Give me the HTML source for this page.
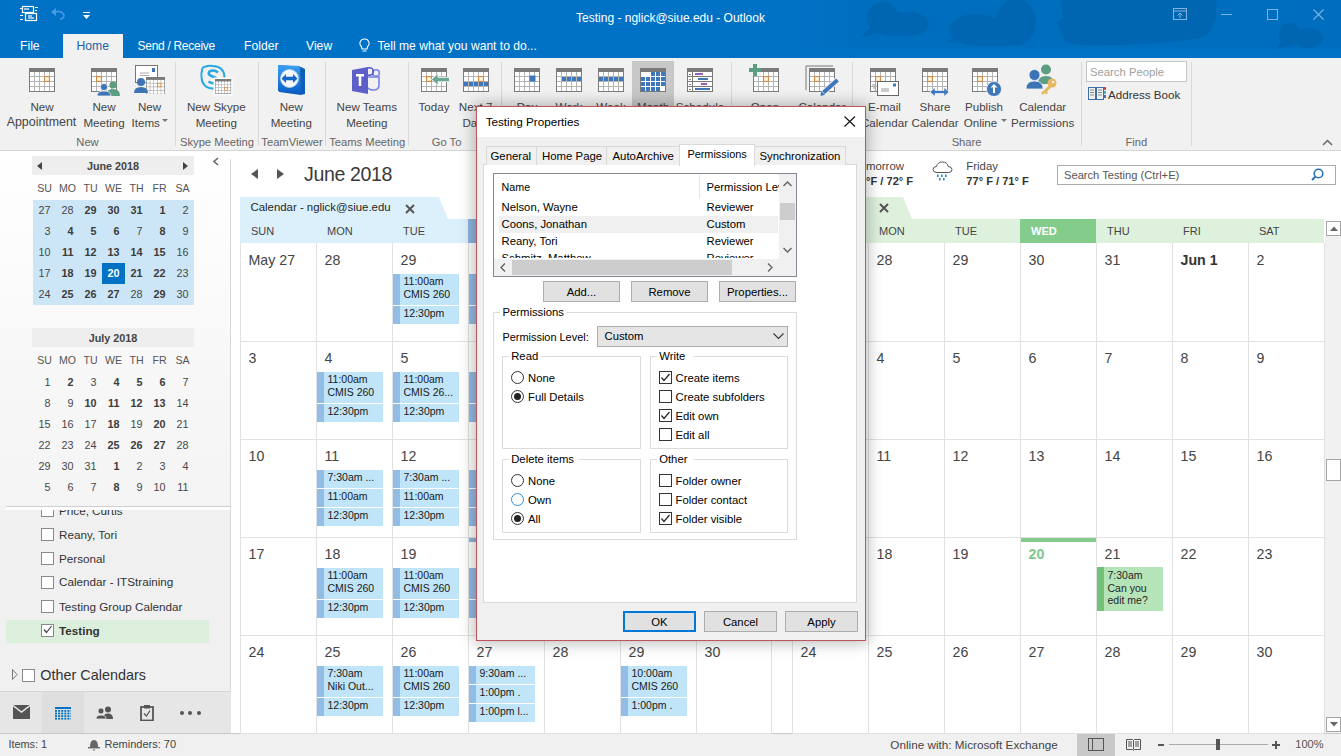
<!DOCTYPE html>
<html><head><meta charset="utf-8"><style>
*{margin:0;padding:0;box-sizing:border-box}
html,body{width:1341px;height:756px;overflow:hidden;background:#fff;font-family:"Liberation Sans",sans-serif}
.t{position:absolute;white-space:nowrap}
.b{position:absolute}
</style></head><body>

<div class="b" style="left:0px;top:0px;width:1341px;height:58px;background:#0072c6"></div>
<svg class="b" style="left:780px;top:0px;" width="561" height="49" viewBox="0 0 561 49"><defs><linearGradient id="tbg" x1="0" x2="1" y1="0" y2="0"><stop offset="0" stop-color="#000" stop-opacity="0"/><stop offset="0.15" stop-color="#000" stop-opacity="0.035"/><stop offset="1" stop-color="#000" stop-opacity="0.04"/></linearGradient></defs>
<rect x="0" y="0" width="561" height="49" fill="url(#tbg)"/>
<g fill="#0066b2">
<circle cx="103" cy="18" r="16"/><ellipse cx="130" cy="24" rx="19" ry="11.5"/><rect x="100" y="12" width="40" height="23.5" rx="6"/>
<path d="M90 28 L81 37 L100 33Z"/>
<ellipse cx="236" cy="22" rx="20" ry="24"/><ellipse cx="196" cy="30" rx="27" ry="16"/><rect x="185" y="20" width="50" height="26" rx="10"/>
<path d="M178 36 L166 41 L190 44Z"/>
<path d="M280 -2 L436 -2 Q440 30 420 38 Q360 47 300 45 Q282 44 282 34 L277 23 L283 18Z"/>
<circle cx="510" cy="34" r="11"/><ellipse cx="528" cy="38" rx="15" ry="10"/><path d="M502 40 L496 49 L515 45Z"/>
</g></svg>
<svg class="b" style="left:20px;top:5px;" width="19" height="18" viewBox="0 0 19 18"><g fill="none" stroke="#fff" stroke-width="1.2">
<rect x="2.5" y="1.5" width="11" height="6"/><rect x="5.5" y="8.5" width="11" height="7"/>
<line x1="4" y1="4" x2="9" y2="4"/><line x1="8" y1="11" x2="12" y2="11"/><line x1="8" y1="13" x2="14" y2="13"/>
</g><g fill="#fff"><rect x="0" y="3" width="2" height="1"/><rect x="0" y="10" width="3" height="1"/><rect x="0" y="14" width="3" height="1"/><rect x="15" y="2" width="3" height="1"/><rect x="15" y="5" width="2" height="1"/></g></svg>
<svg class="b" style="left:50px;top:7px;" width="16" height="13" viewBox="0 0 16 13"><path d="M4 5 Q12 3 14 8 Q14 12 10 12" fill="none" stroke="#4a9be0" stroke-width="1.5"/><path d="M1 5 L6 1 L6 9 Z" fill="#4a9be0"/></svg>
<svg class="b" style="left:83px;top:12px;" width="7" height="8" viewBox="0 0 7 8"><rect x="0" y="0" width="7" height="1" fill="#fff"/><path d="M0 3 L7 3 L3.5 7Z" fill="#fff"/></svg>
<div class="t" style="left:470.5px;width:400px;text-align:center;top:11.64px;font-size:12px;line-height:12px;color:#ffffff;font-weight:normal;">Testing - nglick@siue.edu - Outlook</div>
<svg class="b" style="left:1173px;top:8px;" width="14" height="12" viewBox="0 0 14 12"><g fill="none" stroke="#80b3e2" stroke-width="1"><rect x="0.5" y="0.5" width="13" height="11"/><line x1="0.5" y1="3" x2="13.5" y2="3"/><path d="M7 10 L7 5 M4.5 7.5 L7 5 L9.5 7.5"/></g></svg>
<div class="b" style="left:1221px;top:14px;width:11px;height:1px;background:#80b3e2"></div>
<div class="b" style="left:1267px;top:9px;width:11px;height:11px;border:1px solid #80b3e2"></div>
<svg class="b" style="left:1313px;top:9px;" width="11" height="11" viewBox="0 0 11 11"><path d="M0.5 0.5 L10.5 10.5 M10.5 0.5 L0.5 10.5" stroke="#80b3e2" stroke-width="1.1"/></svg>
<div class="b" style="left:63px;top:34px;width:60px;height:24px;background:#f1f1f1"></div>
<div class="t" style="left:20px;top:39.97px;font-size:12.2px;line-height:12.2px;color:#ffffff;font-weight:normal;">File</div>
<div class="t" style="left:76.5px;top:39.97px;font-size:12.2px;line-height:12.2px;color:#1e5fa8;font-weight:normal;">Home</div>
<div class="t" style="left:137.5px;top:40.14px;font-size:12px;line-height:12px;color:#ffffff;font-weight:normal;letter-spacing:-0.25px;word-spacing:-0.2px">Send / Receive</div>
<div class="t" style="left:244px;top:39.97px;font-size:12.2px;line-height:12.2px;color:#ffffff;font-weight:normal;">Folder</div>
<div class="t" style="left:306px;top:39.97px;font-size:12.2px;line-height:12.2px;color:#ffffff;font-weight:normal;">View</div>
<svg class="b" style="left:359px;top:38px;" width="11" height="15" viewBox="0 0 11 15"><path d="M5.5 1 A4.3 4.3 0 0 1 8.6 8.5 L8 11 L3 11 L2.4 8.5 A4.3 4.3 0 0 1 5.5 1Z" fill="none" stroke="#fff" stroke-width="1.1"/><line x1="3.5" y1="13" x2="7.5" y2="13" stroke="#fff"/></svg>
<div class="t" style="left:377.5px;top:40.06px;font-size:12.1px;line-height:12.1px;color:#ffffff;font-weight:normal;">Tell me what you want to do...</div>
<div class="b" style="left:0px;top:58px;width:1341px;height:93px;background:#f1f1f1;border-bottom:1px solid #d5d5d5"></div>
<div class="b" style="left:175px;top:62px;width:1px;height:84px;background:#d8d8d8"></div>
<div class="b" style="left:258px;top:62px;width:1px;height:84px;background:#d8d8d8"></div>
<div class="b" style="left:325px;top:62px;width:1px;height:84px;background:#d8d8d8"></div>
<div class="b" style="left:408px;top:62px;width:1px;height:84px;background:#d8d8d8"></div>
<div class="b" style="left:501px;top:62px;width:1px;height:84px;background:#d8d8d8"></div>
<div class="b" style="left:731px;top:62px;width:1px;height:84px;background:#d8d8d8"></div>
<div class="b" style="left:852px;top:62px;width:1px;height:84px;background:#d8d8d8"></div>
<div class="b" style="left:1081px;top:62px;width:1px;height:84px;background:#d8d8d8"></div>
<div class="b" style="left:1191px;top:62px;width:1px;height:84px;background:#d8d8d8"></div>
<svg class="b" style="left:29px;top:68px;" width="26" height="24" viewBox="0 0 26 24"><rect x="0" y="0" width="26" height="24" fill="#7c7c7c"/><rect x="1" y="4" width="24" height="19" fill="#b4b4b4"/><rect x="0" y="0" width="26" height="4" fill="#7a7a7a"/><rect x="1" y="4" width="4" height="4" fill="#ffffff"/><rect x="6" y="4" width="4" height="4" fill="#ffffff"/><rect x="11" y="4" width="4" height="4" fill="#ffffff"/><rect x="16" y="4" width="4" height="4" fill="#ffffff"/><rect x="21" y="4" width="4" height="4" fill="#ffffff"/><rect x="1" y="9" width="4" height="4" fill="#ffffff"/><rect x="6" y="9" width="4" height="4" fill="#ffffff"/><rect x="11" y="9" width="4" height="4" fill="#ffffff"/><rect x="16" y="9" width="4" height="4" fill="#ffffff"/><rect x="21" y="9" width="4" height="4" fill="#ffffff"/><rect x="1" y="14" width="4" height="4" fill="#ffffff"/><rect x="6" y="14" width="4" height="4" fill="#ffffff"/><rect x="11" y="14" width="4" height="4" fill="#ffffff"/><rect x="16" y="14" width="4" height="4" fill="#ffffff"/><rect x="21" y="14" width="4" height="4" fill="#ffffff"/><rect x="1" y="19" width="4" height="4" fill="#ffffff"/><rect x="6" y="19" width="4" height="4" fill="#ffffff"/><rect x="11" y="19" width="4" height="4" fill="#ffffff"/><rect x="16" y="19" width="4" height="4" fill="#ffffff"/><rect x="21" y="19" width="4" height="4" fill="#ffffff"/><rect x="15.6" y="8.6" width="4.8" height="4.8" fill="#fffbe6" stroke="#d3863c" stroke-width="1.1"/></svg>
<div class="t" style="left:-18.0px;width:120px;text-align:center;top:100.68px;font-size:11.6px;line-height:11.6px;color:#444444;font-weight:normal;">New</div>
<div class="t" style="left:-18.5px;width:120px;text-align:center;top:116.00px;font-size:12.4px;line-height:12.4px;color:#444444;font-weight:normal;">Appointment</div>
<svg class="b" style="left:91px;top:68px;" width="30" height="28" viewBox="0 0 30 28"><rect x="0" y="0" width="26" height="24" fill="#7c7c7c"/><rect x="1" y="4" width="24" height="19" fill="#b4b4b4"/><rect x="0" y="0" width="26" height="4" fill="#7a7a7a"/><rect x="1" y="4" width="4" height="4" fill="#ffffff"/><rect x="6" y="4" width="4" height="4" fill="#ffffff"/><rect x="11" y="4" width="4" height="4" fill="#ffffff"/><rect x="16" y="4" width="4" height="4" fill="#ffffff"/><rect x="21" y="4" width="4" height="4" fill="#ffffff"/><rect x="1" y="9" width="4" height="4" fill="#ffffff"/><rect x="6" y="9" width="4" height="4" fill="#ffffff"/><rect x="11" y="9" width="4" height="4" fill="#ffffff"/><rect x="16" y="9" width="4" height="4" fill="#ffffff"/><rect x="21" y="9" width="4" height="4" fill="#ffffff"/><rect x="1" y="14" width="4" height="4" fill="#ffffff"/><rect x="6" y="14" width="4" height="4" fill="#ffffff"/><rect x="11" y="14" width="4" height="4" fill="#ffffff"/><rect x="16" y="14" width="4" height="4" fill="#ffffff"/><rect x="21" y="14" width="4" height="4" fill="#ffffff"/><rect x="1" y="19" width="4" height="4" fill="#ffffff"/><rect x="6" y="19" width="4" height="4" fill="#ffffff"/><rect x="11" y="19" width="4" height="4" fill="#ffffff"/><rect x="16" y="19" width="4" height="4" fill="#ffffff"/><rect x="21" y="19" width="4" height="4" fill="#ffffff"/><rect x="5.6" y="8.6" width="4.8" height="4.8" fill="#fffbe6" stroke="#d3863c" stroke-width="1.1"/><circle cx="22" cy="17" r="3.6" fill="#5d9e82"/><path d="M15 28 Q15 21 22 21 Q29 21 29 28Z" fill="#5d9e82"/><circle cx="13" cy="19" r="3.6" fill="#3d74b5" stroke="#f1f1f1" stroke-width="0.8"/><path d="M6 28 Q6 23 13 23 Q20 23 20 28Z" fill="#3d74b5" stroke="#f1f1f1" stroke-width="0.8"/></svg>
<div class="t" style="left:44.0px;width:120px;text-align:center;top:100.68px;font-size:11.6px;line-height:11.6px;color:#444444;font-weight:normal;">New</div>
<div class="t" style="left:44.0px;width:120px;text-align:center;top:116.68px;font-size:11.6px;line-height:11.6px;color:#444444;font-weight:normal;">Meeting</div>
<svg class="b" style="left:134px;top:65px;" width="31" height="29" viewBox="0 0 31 29"><rect x="1.5" y="0.5" width="22" height="17" fill="#fff" stroke="#777"/><rect x="18" y="3" width="3" height="4" fill="#3d74b5"/><line x1="6" y1="8" x2="15" y2="8" stroke="#aaa"/><line x1="6" y1="10.5" x2="15" y2="10.5" stroke="#aaa"/><g transform="translate(12,12) scale(0.73)"><rect x="0" y="0" width="26" height="24" fill="#7c7c7c"/><rect x="1" y="4" width="24" height="19" fill="#b4b4b4"/><rect x="0" y="0" width="26" height="4" fill="#7a7a7a"/><rect x="1" y="4" width="4" height="4" fill="#ffffff"/><rect x="6" y="4" width="4" height="4" fill="#ffffff"/><rect x="11" y="4" width="4" height="4" fill="#ffffff"/><rect x="16" y="4" width="4" height="4" fill="#ffffff"/><rect x="21" y="4" width="4" height="4" fill="#ffffff"/><rect x="1" y="9" width="4" height="4" fill="#ffffff"/><rect x="6" y="9" width="4" height="4" fill="#ffffff"/><rect x="11" y="9" width="4" height="4" fill="#ffffff"/><rect x="16" y="9" width="4" height="4" fill="#ffffff"/><rect x="21" y="9" width="4" height="4" fill="#ffffff"/><rect x="1" y="14" width="4" height="4" fill="#ffffff"/><rect x="6" y="14" width="4" height="4" fill="#ffffff"/><rect x="11" y="14" width="4" height="4" fill="#ffffff"/><rect x="16" y="14" width="4" height="4" fill="#ffffff"/><rect x="21" y="14" width="4" height="4" fill="#ffffff"/><rect x="1" y="19" width="4" height="4" fill="#ffffff"/><rect x="6" y="19" width="4" height="4" fill="#ffffff"/><rect x="11" y="19" width="4" height="4" fill="#ffffff"/><rect x="16" y="19" width="4" height="4" fill="#ffffff"/><rect x="21" y="19" width="4" height="4" fill="#ffffff"/><rect x="15.6" y="8.6" width="4.8" height="4.8" fill="#fffbe6" stroke="#d3863c" stroke-width="1.1"/></g><circle cx="7" cy="17" r="4" fill="#3d74b5"/><path d="M0 28 Q0 22 7 22 Q14 22 14 28Z" fill="#3d74b5"/></svg>
<div class="t" style="left:119.5px;width:60px;text-align:center;top:100.68px;font-size:11.6px;line-height:11.6px;color:#444444;font-weight:normal;">New</div>
<div class="t" style="left:131.5px;top:116.68px;font-size:11.6px;line-height:11.6px;color:#444444;font-weight:normal;">Items</div>
<svg class="b" style="left:162px;top:119px;" width="6" height="4" viewBox="0 0 6 4"><path d="M0 0 L6 0 L3 3Z" fill="#777"/></svg>
<div class="t" style="left:12.5px;width:150px;text-align:center;top:136.52px;font-size:11.2px;line-height:11.2px;color:#666666;font-weight:normal;">New</div>
<svg class="b" style="left:199px;top:64px;" width="34" height="32" viewBox="0 0 34 32"><path d="M7 2.5 Q9 1.5 14 2 Q25 2.5 25.5 13 Q26 17 25 19 Q26 24 21 25 Q18 26 14 24.5 Q3 24 2.5 13 Q2 9 3 7 Q2.5 3 7 2.5Z" fill="none" stroke="#2aa9e0" stroke-width="2"/><path d="M19 8.5 Q15 5 10.5 7.5 Q8 10.5 13.5 12.5 Q19 14 18 17.5 Q15 21 9.5 17.5" fill="none" stroke="#2aa9e0" stroke-width="2.6"/><rect x="14.5" y="13.5" width="19" height="18" fill="#fff"/><g transform="translate(16,15) scale(0.62)"><rect x="0" y="0" width="26" height="24" fill="#7c7c7c"/><rect x="1" y="4" width="24" height="19" fill="#b4b4b4"/><rect x="0" y="0" width="26" height="4" fill="#7a7a7a"/><rect x="1" y="4" width="4" height="4" fill="#ffffff"/><rect x="6" y="4" width="4" height="4" fill="#ffffff"/><rect x="11" y="4" width="4" height="4" fill="#ffffff"/><rect x="16" y="4" width="4" height="4" fill="#ffffff"/><rect x="21" y="4" width="4" height="4" fill="#ffffff"/><rect x="1" y="9" width="4" height="4" fill="#ffffff"/><rect x="6" y="9" width="4" height="4" fill="#ffffff"/><rect x="11" y="9" width="4" height="4" fill="#ffffff"/><rect x="16" y="9" width="4" height="4" fill="#ffffff"/><rect x="21" y="9" width="4" height="4" fill="#ffffff"/><rect x="1" y="14" width="4" height="4" fill="#ffffff"/><rect x="6" y="14" width="4" height="4" fill="#ffffff"/><rect x="11" y="14" width="4" height="4" fill="#ffffff"/><rect x="16" y="14" width="4" height="4" fill="#ffffff"/><rect x="21" y="14" width="4" height="4" fill="#ffffff"/><rect x="1" y="19" width="4" height="4" fill="#ffffff"/><rect x="6" y="19" width="4" height="4" fill="#ffffff"/><rect x="11" y="19" width="4" height="4" fill="#ffffff"/><rect x="16" y="19" width="4" height="4" fill="#ffffff"/><rect x="21" y="19" width="4" height="4" fill="#ffffff"/><rect x="15.6" y="13.6" width="4.8" height="4.8" fill="#fffbe6" stroke="#d3863c" stroke-width="1.1"/></g></svg>
<div class="t" style="left:156.3px;width:120px;text-align:center;top:100.68px;font-size:11.6px;line-height:11.6px;color:#444444;font-weight:normal;">New Skype</div>
<div class="t" style="left:156.3px;width:120px;text-align:center;top:116.68px;font-size:11.6px;line-height:11.6px;color:#444444;font-weight:normal;">Meeting</div>
<div class="t" style="left:142.0px;width:150px;text-align:center;top:136.52px;font-size:11.2px;line-height:11.2px;color:#666666;font-weight:normal;">Skype Meeting</div>
<svg class="b" style="left:277px;top:64px;" width="29" height="32" viewBox="0 0 29 32"><defs><linearGradient id="tvg" x1="0" y1="0" x2="0" y2="1"><stop offset="0" stop-color="#3aa0f0"/><stop offset="1" stop-color="#0a5fc8"/></linearGradient></defs><path d="M2 1 L24 3 L28 5 L28 30 L24 31 L2 28 Z" fill="#0e5fb8"/><path d="M1 1 L23 2 L24 29 L1 27Z" fill="url(#tvg)"/><circle cx="12.5" cy="14.5" r="9" fill="#f4f8fc"/><circle cx="12.5" cy="14.5" r="9" fill="none" stroke="#bcd6f0" stroke-width="0.8"/><path d="M4.5 14.5 L9 10 L9 12.8 L16 12.8 L16 10 L20.5 14.5 L16 19 L16 16.2 L9 16.2 L9 19Z" fill="#1565c8"/></svg>
<div class="t" style="left:231.3px;width:120px;text-align:center;top:100.68px;font-size:11.6px;line-height:11.6px;color:#444444;font-weight:normal;">New</div>
<div class="t" style="left:231.3px;width:120px;text-align:center;top:116.68px;font-size:11.6px;line-height:11.6px;color:#444444;font-weight:normal;">Meeting</div>
<div class="t" style="left:217.0px;width:150px;text-align:center;top:136.52px;font-size:11.2px;line-height:11.2px;color:#666666;font-weight:normal;">TeamViewer</div>
<svg class="b" style="left:352px;top:65px;" width="30" height="30" viewBox="0 0 30 30"><circle cx="24" cy="8" r="3.3" fill="none" stroke="#7b83eb" stroke-width="1.6"/><circle cx="17.5" cy="6.5" r="3.8" fill="none" stroke="#5059c9" stroke-width="1.6"/><path d="M14 12 L27 12 L27 20 Q27 25 21.5 25 Q17 25 15 22" fill="none" stroke="#7b83eb" stroke-width="1.6"/><path d="M0 5 L16 2 L16 29 L0 26Z" fill="#5b5fc7"/><path d="M4 9 L12 9 L12 11.5 L9.3 11.5 L9.3 21 L6.7 21 L6.7 11.5 L4 11.5Z" fill="#fff"/></svg>
<div class="t" style="left:306.8px;width:120px;text-align:center;top:100.68px;font-size:11.6px;line-height:11.6px;color:#444444;font-weight:normal;">New Teams</div>
<div class="t" style="left:306.8px;width:120px;text-align:center;top:116.68px;font-size:11.6px;line-height:11.6px;color:#444444;font-weight:normal;">Meeting</div>
<div class="t" style="left:292.2px;width:150px;text-align:center;top:136.52px;font-size:11.2px;line-height:11.2px;color:#666666;font-weight:normal;">Teams Meeting</div>
<svg class="b" style="left:421px;top:68px;" width="29" height="24" viewBox="0 0 29 24"><rect x="0" y="0" width="26" height="24" fill="#7c7c7c"/><rect x="1" y="4" width="24" height="19" fill="#b4b4b4"/><rect x="0" y="0" width="26" height="4" fill="#7a7a7a"/><rect x="1" y="4" width="4" height="4" fill="#ffffff"/><rect x="6" y="4" width="4" height="4" fill="#ffffff"/><rect x="11" y="4" width="4" height="4" fill="#ffffff"/><rect x="16" y="4" width="4" height="4" fill="#ffffff"/><rect x="21" y="4" width="4" height="4" fill="#ffffff"/><rect x="1" y="9" width="4" height="4" fill="#ffffff"/><rect x="6" y="9" width="4" height="4" fill="#ffffff"/><rect x="11" y="9" width="4" height="4" fill="#ffffff"/><rect x="16" y="9" width="4" height="4" fill="#ffffff"/><rect x="21" y="9" width="4" height="4" fill="#ffffff"/><rect x="1" y="14" width="4" height="4" fill="#ffffff"/><rect x="6" y="14" width="4" height="4" fill="#ffffff"/><rect x="11" y="14" width="4" height="4" fill="#ffffff"/><rect x="16" y="14" width="4" height="4" fill="#ffffff"/><rect x="21" y="14" width="4" height="4" fill="#ffffff"/><rect x="1" y="19" width="4" height="4" fill="#ffffff"/><rect x="6" y="19" width="4" height="4" fill="#ffffff"/><rect x="11" y="19" width="4" height="4" fill="#ffffff"/><rect x="16" y="19" width="4" height="4" fill="#ffffff"/><rect x="21" y="19" width="4" height="4" fill="#ffffff"/><rect x="5.6" y="8.6" width="4.8" height="4.8" fill="#fffbe6" stroke="#d3863c" stroke-width="1.1"/><path d="M10.5 11.5 L17 5.5 L17 9.3 L28.5 9.3 L28.5 13.7 L17 13.7 L17 17.5Z" fill="#6aa892" stroke="#fff" stroke-width="0.8"/></svg>
<div class="t" style="left:374.0px;width:120px;text-align:center;top:100.68px;font-size:11.6px;line-height:11.6px;color:#444444;font-weight:normal;">Today</div>
<svg class="b" style="left:463px;top:68px;" width="26" height="24" viewBox="0 0 26 24"><rect x="0" y="0" width="26" height="24" fill="#7c7c7c"/><rect x="1" y="4" width="24" height="19" fill="#b4b4b4"/><rect x="0" y="0" width="26" height="4" fill="#7a7a7a"/><rect x="1" y="4" width="4" height="4" fill="#ffffff"/><rect x="6" y="4" width="4" height="4" fill="#ffffff"/><rect x="11" y="4" width="4" height="4" fill="#ffffff"/><rect x="16" y="4" width="4" height="4" fill="#ffffff"/><rect x="21" y="4" width="4" height="4" fill="#ffffff"/><rect x="1" y="9" width="4" height="4" fill="#ffffff"/><rect x="6" y="9" width="4" height="4" fill="#ffffff"/><rect x="11" y="9" width="4" height="4" fill="#ffffff"/><rect x="16" y="9" width="4" height="4" fill="#ffffff"/><rect x="21" y="9" width="4" height="4" fill="#ffffff"/><rect x="1" y="14" width="4" height="4" fill="#3f77bd"/><rect x="6" y="14" width="4" height="4" fill="#3f77bd"/><rect x="11" y="14" width="4" height="4" fill="#3f77bd"/><rect x="16" y="14" width="4" height="4" fill="#3f77bd"/><rect x="21" y="14" width="4" height="4" fill="#3f77bd"/><rect x="1" y="19" width="4" height="4" fill="#ffffff"/><rect x="6" y="19" width="4" height="4" fill="#ffffff"/><rect x="11" y="19" width="4" height="4" fill="#ffffff"/><rect x="16" y="19" width="4" height="4" fill="#ffffff"/><rect x="21" y="19" width="4" height="4" fill="#ffffff"/><rect x="15.6" y="8.6" width="4.8" height="4.8" fill="#fffbe6" stroke="#d3863c" stroke-width="1.1"/></svg>
<div class="t" style="left:415.6px;width:120px;text-align:center;top:100.68px;font-size:11.6px;line-height:11.6px;color:#444444;font-weight:normal;">Next 7</div>
<div class="t" style="left:415.6px;width:120px;text-align:center;top:116.68px;font-size:11.6px;line-height:11.6px;color:#444444;font-weight:normal;">Days</div>
<div class="t" style="left:371.6px;width:150px;text-align:center;top:136.52px;font-size:11.2px;line-height:11.2px;color:#666666;font-weight:normal;">Go To</div>
<div class="b" style="left:632px;top:61px;width:42px;height:50px;background:#c8c8c8"></div>
<svg class="b" style="left:514px;top:68px;" width="26" height="24" viewBox="0 0 26 24"><rect x="0" y="0" width="26" height="24" fill="#7c7c7c"/><rect x="1" y="4" width="24" height="19" fill="#b4b4b4"/><rect x="0" y="0" width="26" height="4" fill="#7a7a7a"/><rect x="1" y="4" width="4" height="4" fill="#ffffff"/><rect x="6" y="4" width="4" height="4" fill="#ffffff"/><rect x="11" y="4" width="4" height="4" fill="#ffffff"/><rect x="16" y="4" width="4" height="4" fill="#ffffff"/><rect x="21" y="4" width="4" height="4" fill="#ffffff"/><rect x="1" y="9" width="4" height="4" fill="#ffffff"/><rect x="6" y="9" width="4" height="4" fill="#ffffff"/><rect x="11" y="9" width="4" height="4" fill="#ffffff"/><rect x="16" y="9" width="4" height="4" fill="#ffffff"/><rect x="21" y="9" width="4" height="4" fill="#ffffff"/><rect x="1" y="14" width="4" height="4" fill="#ffffff"/><rect x="6" y="14" width="4" height="4" fill="#ffffff"/><rect x="11" y="14" width="4" height="4" fill="#ffffff"/><rect x="16" y="14" width="4" height="4" fill="#ffffff"/><rect x="21" y="14" width="4" height="4" fill="#ffffff"/><rect x="1" y="19" width="4" height="4" fill="#ffffff"/><rect x="6" y="19" width="4" height="4" fill="#ffffff"/><rect x="11" y="19" width="4" height="4" fill="#ffffff"/><rect x="16" y="19" width="4" height="4" fill="#ffffff"/><rect x="21" y="19" width="4" height="4" fill="#ffffff"/><rect x="15.5" y="7.5" width="6" height="6" fill="#3f77bd"/></svg>
<div class="t" style="left:467.0px;width:120px;text-align:center;top:100.68px;font-size:11.6px;line-height:11.6px;color:#444444;font-weight:normal;">Day</div>
<svg class="b" style="left:556px;top:68px;" width="26" height="24" viewBox="0 0 26 24"><rect x="0" y="0" width="26" height="24" fill="#7c7c7c"/><rect x="1" y="4" width="24" height="19" fill="#b4b4b4"/><rect x="0" y="0" width="26" height="4" fill="#7a7a7a"/><rect x="1" y="4" width="4" height="4" fill="#ffffff"/><rect x="6" y="4" width="4" height="4" fill="#ffffff"/><rect x="11" y="4" width="4" height="4" fill="#ffffff"/><rect x="16" y="4" width="4" height="4" fill="#ffffff"/><rect x="21" y="4" width="4" height="4" fill="#ffffff"/><rect x="1" y="9" width="4" height="4" fill="#ffffff"/><rect x="6" y="9" width="4" height="4" fill="#3f77bd"/><rect x="11" y="9" width="4" height="4" fill="#3f77bd"/><rect x="16" y="9" width="4" height="4" fill="#3f77bd"/><rect x="21" y="9" width="4" height="4" fill="#3f77bd"/><rect x="1" y="14" width="4" height="4" fill="#ffffff"/><rect x="6" y="14" width="4" height="4" fill="#ffffff"/><rect x="11" y="14" width="4" height="4" fill="#ffffff"/><rect x="16" y="14" width="4" height="4" fill="#ffffff"/><rect x="21" y="14" width="4" height="4" fill="#ffffff"/><rect x="1" y="19" width="4" height="4" fill="#ffffff"/><rect x="6" y="19" width="4" height="4" fill="#ffffff"/><rect x="11" y="19" width="4" height="4" fill="#ffffff"/><rect x="16" y="19" width="4" height="4" fill="#ffffff"/><rect x="21" y="19" width="4" height="4" fill="#ffffff"/></svg>
<div class="t" style="left:509.0px;width:120px;text-align:center;top:100.68px;font-size:11.6px;line-height:11.6px;color:#444444;font-weight:normal;">Work</div>
<svg class="b" style="left:598px;top:68px;" width="26" height="24" viewBox="0 0 26 24"><rect x="0" y="0" width="26" height="24" fill="#7c7c7c"/><rect x="1" y="4" width="24" height="19" fill="#b4b4b4"/><rect x="0" y="0" width="26" height="4" fill="#7a7a7a"/><rect x="1" y="4" width="4" height="4" fill="#ffffff"/><rect x="6" y="4" width="4" height="4" fill="#ffffff"/><rect x="11" y="4" width="4" height="4" fill="#ffffff"/><rect x="16" y="4" width="4" height="4" fill="#ffffff"/><rect x="21" y="4" width="4" height="4" fill="#ffffff"/><rect x="1" y="9" width="4" height="4" fill="#3f77bd"/><rect x="6" y="9" width="4" height="4" fill="#3f77bd"/><rect x="11" y="9" width="4" height="4" fill="#3f77bd"/><rect x="16" y="9" width="4" height="4" fill="#3f77bd"/><rect x="21" y="9" width="4" height="4" fill="#3f77bd"/><rect x="1" y="14" width="4" height="4" fill="#ffffff"/><rect x="6" y="14" width="4" height="4" fill="#ffffff"/><rect x="11" y="14" width="4" height="4" fill="#ffffff"/><rect x="16" y="14" width="4" height="4" fill="#ffffff"/><rect x="21" y="14" width="4" height="4" fill="#ffffff"/><rect x="1" y="19" width="4" height="4" fill="#ffffff"/><rect x="6" y="19" width="4" height="4" fill="#ffffff"/><rect x="11" y="19" width="4" height="4" fill="#ffffff"/><rect x="16" y="19" width="4" height="4" fill="#ffffff"/><rect x="21" y="19" width="4" height="4" fill="#ffffff"/></svg>
<div class="t" style="left:551.0px;width:120px;text-align:center;top:100.68px;font-size:11.6px;line-height:11.6px;color:#444444;font-weight:normal;">Week</div>
<svg class="b" style="left:640px;top:68px;" width="26" height="24" viewBox="0 0 26 24"><rect x="0" y="0" width="26" height="24" fill="#7c7c7c"/><rect x="1" y="4" width="24" height="19" fill="#ffffff"/><rect x="0" y="0" width="26" height="4" fill="#7a7a7a"/><rect x="1" y="4" width="4" height="4" fill="#ffffff"/><rect x="6" y="4" width="4" height="4" fill="#ffffff"/><rect x="11" y="4" width="4" height="4" fill="#3f77bd"/><rect x="16" y="4" width="4" height="4" fill="#3f77bd"/><rect x="21" y="4" width="4" height="4" fill="#3f77bd"/><rect x="1" y="9" width="4" height="4" fill="#3f77bd"/><rect x="6" y="9" width="4" height="4" fill="#3f77bd"/><rect x="11" y="9" width="4" height="4" fill="#3f77bd"/><rect x="16" y="9" width="4" height="4" fill="#3f77bd"/><rect x="21" y="9" width="4" height="4" fill="#3f77bd"/><rect x="1" y="14" width="4" height="4" fill="#3f77bd"/><rect x="6" y="14" width="4" height="4" fill="#3f77bd"/><rect x="11" y="14" width="4" height="4" fill="#3f77bd"/><rect x="16" y="14" width="4" height="4" fill="#3f77bd"/><rect x="21" y="14" width="4" height="4" fill="#3f77bd"/><rect x="1" y="19" width="4" height="4" fill="#3f77bd"/><rect x="6" y="19" width="4" height="4" fill="#3f77bd"/><rect x="11" y="19" width="4" height="4" fill="#3f77bd"/><rect x="16" y="19" width="4" height="4" fill="#3f77bd"/><rect x="21" y="19" width="4" height="4" fill="#ffffff"/></svg>
<div class="t" style="left:593.0px;width:120px;text-align:center;top:100.68px;font-size:11.6px;line-height:11.6px;color:#444444;font-weight:normal;">Month</div>
<svg class="b" style="left:687px;top:68px;" width="26" height="24" viewBox="0 0 26 24"><rect x="0" y="0" width="26" height="24" fill="#7a7a7a"/><rect x="1" y="4" width="4" height="4" fill="#fff"/><rect x="6" y="4" width="19" height="4" fill="#fff"/><rect x="2" y="6" width="2" height="1" fill="#888"/><rect x="1" y="9" width="4" height="4" fill="#fff"/><rect x="6" y="9" width="19" height="4" fill="#fff"/><rect x="2" y="11" width="2" height="1" fill="#888"/><rect x="1" y="14" width="4" height="4" fill="#fff"/><rect x="6" y="14" width="19" height="4" fill="#fff"/><rect x="2" y="16" width="2" height="1" fill="#888"/><rect x="1" y="19" width="4" height="4" fill="#fff"/><rect x="6" y="19" width="19" height="4" fill="#fff"/><rect x="2" y="21" width="2" height="1" fill="#888"/><rect x="8" y="5" width="8" height="2" fill="#9b5fb4"/><rect x="11" y="10" width="10" height="2" fill="#3f77bd"/><rect x="14" y="15" width="6" height="2" fill="#9b5fb4"/><rect x="8" y="20" width="15" height="2" fill="#3f77bd"/></svg>
<div class="t" style="left:640.0px;width:120px;text-align:center;top:100.68px;font-size:11.6px;line-height:11.6px;color:#444444;font-weight:normal;">Schedule</div>
<svg class="b" style="left:749px;top:63px;" width="31" height="29" viewBox="0 0 31 29"><g transform="translate(4,5)"><rect x="0" y="0" width="26" height="24" fill="#7c7c7c"/><rect x="1" y="4" width="24" height="19" fill="#b4b4b4"/><rect x="0" y="0" width="26" height="4" fill="#7a7a7a"/><rect x="1" y="4" width="4" height="4" fill="#ffffff"/><rect x="6" y="4" width="4" height="4" fill="#ffffff"/><rect x="11" y="4" width="4" height="4" fill="#ffffff"/><rect x="16" y="4" width="4" height="4" fill="#ffffff"/><rect x="21" y="4" width="4" height="4" fill="#ffffff"/><rect x="1" y="9" width="4" height="4" fill="#ffffff"/><rect x="6" y="9" width="4" height="4" fill="#ffffff"/><rect x="11" y="9" width="4" height="4" fill="#ffffff"/><rect x="16" y="9" width="4" height="4" fill="#ffffff"/><rect x="21" y="9" width="4" height="4" fill="#ffffff"/><rect x="1" y="14" width="4" height="4" fill="#ffffff"/><rect x="6" y="14" width="4" height="4" fill="#ffffff"/><rect x="11" y="14" width="4" height="4" fill="#ffffff"/><rect x="16" y="14" width="4" height="4" fill="#ffffff"/><rect x="21" y="14" width="4" height="4" fill="#ffffff"/><rect x="1" y="19" width="4" height="4" fill="#ffffff"/><rect x="6" y="19" width="4" height="4" fill="#ffffff"/><rect x="11" y="19" width="4" height="4" fill="#ffffff"/><rect x="16" y="19" width="4" height="4" fill="#ffffff"/><rect x="21" y="19" width="4" height="4" fill="#ffffff"/><rect x="10.6" y="8.6" width="4.8" height="4.8" fill="#fffbe6" stroke="#d3863c" stroke-width="1.1"/></g><rect x="0" y="0" width="12" height="13" fill="#f1f1f1"/><path d="M4 1 L8 1 L8 5 L12 5 L12 9 L8 9 L8 13 L4 13 L4 9 L0 9 L0 5 L4 5Z" fill="#5d9e82"/></svg>
<div class="t" style="left:705.0px;width:120px;text-align:center;top:100.68px;font-size:11.6px;line-height:11.6px;color:#444444;font-weight:normal;">Open</div>
<svg class="b" style="left:805px;top:65px;" width="34" height="31" viewBox="0 0 34 31"><path d="M1 25 L1 1 L28 1" fill="none" stroke="#777" stroke-width="1"/><g transform="translate(4,3)"><rect x="0" y="0" width="26" height="24" fill="#7c7c7c"/><rect x="1" y="4" width="24" height="19" fill="#b4b4b4"/><rect x="0" y="0" width="26" height="4" fill="#7a7a7a"/><rect x="1" y="4" width="4" height="4" fill="#ffffff"/><rect x="6" y="4" width="4" height="4" fill="#ffffff"/><rect x="11" y="4" width="4" height="4" fill="#ffffff"/><rect x="16" y="4" width="4" height="4" fill="#ffffff"/><rect x="21" y="4" width="4" height="4" fill="#ffffff"/><rect x="1" y="9" width="4" height="4" fill="#ffffff"/><rect x="6" y="9" width="4" height="4" fill="#ffffff"/><rect x="11" y="9" width="4" height="4" fill="#ffffff"/><rect x="16" y="9" width="4" height="4" fill="#ffffff"/><rect x="21" y="9" width="4" height="4" fill="#ffffff"/><rect x="1" y="14" width="4" height="4" fill="#ffffff"/><rect x="6" y="14" width="4" height="4" fill="#ffffff"/><rect x="11" y="14" width="4" height="4" fill="#ffffff"/><rect x="16" y="14" width="4" height="4" fill="#ffffff"/><rect x="21" y="14" width="4" height="4" fill="#ffffff"/><rect x="1" y="19" width="4" height="4" fill="#ffffff"/><rect x="6" y="19" width="4" height="4" fill="#ffffff"/><rect x="11" y="19" width="4" height="4" fill="#ffffff"/><rect x="16" y="19" width="4" height="4" fill="#ffffff"/><rect x="21" y="19" width="4" height="4" fill="#ffffff"/><rect x="5.6" y="8.6" width="4.8" height="4.8" fill="#fffbe6" stroke="#d3863c" stroke-width="1.1"/></g><line x1="18" y1="28" x2="32.5" y2="15" stroke="#f1f1f1" stroke-width="6"/><line x1="18.5" y1="27.5" x2="32.5" y2="15" stroke="#3f77bd" stroke-width="4"/><path d="M15.5 31 L16.3 26.2 L20 29.8Z" fill="#3f77bd"/></svg>
<div class="t" style="left:762.0px;width:120px;text-align:center;top:100.68px;font-size:11.6px;line-height:11.6px;color:#444444;font-weight:normal;">Calendar</div>
<svg class="b" style="left:870px;top:68px;" width="30" height="29" viewBox="0 0 30 29"><rect x="0" y="0" width="26" height="24" fill="#7c7c7c"/><rect x="1" y="4" width="24" height="19" fill="#b4b4b4"/><rect x="0" y="0" width="26" height="4" fill="#7a7a7a"/><rect x="1" y="4" width="4" height="4" fill="#ffffff"/><rect x="6" y="4" width="4" height="4" fill="#ffffff"/><rect x="11" y="4" width="4" height="4" fill="#ffffff"/><rect x="16" y="4" width="4" height="4" fill="#ffffff"/><rect x="21" y="4" width="4" height="4" fill="#ffffff"/><rect x="1" y="9" width="4" height="4" fill="#ffffff"/><rect x="6" y="9" width="4" height="4" fill="#ffffff"/><rect x="11" y="9" width="4" height="4" fill="#ffffff"/><rect x="16" y="9" width="4" height="4" fill="#ffffff"/><rect x="21" y="9" width="4" height="4" fill="#ffffff"/><rect x="1" y="14" width="4" height="4" fill="#ffffff"/><rect x="6" y="14" width="4" height="4" fill="#ffffff"/><rect x="11" y="14" width="4" height="4" fill="#ffffff"/><rect x="16" y="14" width="4" height="4" fill="#ffffff"/><rect x="21" y="14" width="4" height="4" fill="#ffffff"/><rect x="1" y="19" width="4" height="4" fill="#ffffff"/><rect x="6" y="19" width="4" height="4" fill="#ffffff"/><rect x="11" y="19" width="4" height="4" fill="#ffffff"/><rect x="16" y="19" width="4" height="4" fill="#ffffff"/><rect x="21" y="19" width="4" height="4" fill="#ffffff"/><rect x="5.6" y="8.6" width="4.8" height="4.8" fill="#fffbe6" stroke="#d3863c" stroke-width="1.1"/><rect x="7.5" y="13.5" width="21" height="14" fill="#fff" stroke="#666"/><rect x="23" y="15.5" width="3" height="3" fill="#3f77bd"/><line x1="11" y1="21" x2="19" y2="21" stroke="#999"/><line x1="11" y1="23" x2="19" y2="23" stroke="#999"/><line x1="2" y1="17" x2="6" y2="17" stroke="#999"/><line x1="3" y1="20" x2="6" y2="20" stroke="#999"/><line x1="4" y1="23" x2="6" y2="23" stroke="#999"/></svg>
<div class="t" style="left:824.5px;width:120px;text-align:center;top:100.68px;font-size:11.6px;line-height:11.6px;color:#444444;font-weight:normal;">E-mail</div>
<div class="t" style="left:824.5px;width:120px;text-align:center;top:116.68px;font-size:11.6px;line-height:11.6px;color:#444444;font-weight:normal;">Calendar</div>
<svg class="b" style="left:922px;top:68px;" width="30" height="28" viewBox="0 0 30 28"><rect x="0" y="0" width="26" height="24" fill="#7c7c7c"/><rect x="1" y="4" width="24" height="19" fill="#b4b4b4"/><rect x="0" y="0" width="26" height="4" fill="#7a7a7a"/><rect x="1" y="4" width="4" height="4" fill="#ffffff"/><rect x="6" y="4" width="4" height="4" fill="#ffffff"/><rect x="11" y="4" width="4" height="4" fill="#ffffff"/><rect x="16" y="4" width="4" height="4" fill="#ffffff"/><rect x="21" y="4" width="4" height="4" fill="#ffffff"/><rect x="1" y="9" width="4" height="4" fill="#ffffff"/><rect x="6" y="9" width="4" height="4" fill="#ffffff"/><rect x="11" y="9" width="4" height="4" fill="#ffffff"/><rect x="16" y="9" width="4" height="4" fill="#ffffff"/><rect x="21" y="9" width="4" height="4" fill="#ffffff"/><rect x="1" y="14" width="4" height="4" fill="#ffffff"/><rect x="6" y="14" width="4" height="4" fill="#ffffff"/><rect x="11" y="14" width="4" height="4" fill="#ffffff"/><rect x="16" y="14" width="4" height="4" fill="#ffffff"/><rect x="21" y="14" width="4" height="4" fill="#ffffff"/><rect x="1" y="19" width="4" height="4" fill="#ffffff"/><rect x="6" y="19" width="4" height="4" fill="#ffffff"/><rect x="11" y="19" width="4" height="4" fill="#ffffff"/><rect x="16" y="19" width="4" height="4" fill="#ffffff"/><rect x="21" y="19" width="4" height="4" fill="#ffffff"/><rect x="5.6" y="8.6" width="4.8" height="4.8" fill="#fffbe6" stroke="#d3863c" stroke-width="1.1"/><path d="M8 24 L13 19.5 L13 22.5 L22 22.5 L22 19.5 L27 24 L22 28.5 L22 25.5 L13 25.5 L13 28.5Z" fill="#3f77bd" stroke="#f1f1f1" stroke-width="0.7"/></svg>
<div class="t" style="left:875.0px;width:120px;text-align:center;top:100.68px;font-size:11.6px;line-height:11.6px;color:#444444;font-weight:normal;">Share</div>
<div class="t" style="left:875.0px;width:120px;text-align:center;top:116.68px;font-size:11.6px;line-height:11.6px;color:#444444;font-weight:normal;">Calendar</div>
<svg class="b" style="left:972px;top:68px;" width="30" height="28" viewBox="0 0 30 28"><rect x="0" y="0" width="26" height="24" fill="#7c7c7c"/><rect x="1" y="4" width="24" height="19" fill="#b4b4b4"/><rect x="0" y="0" width="26" height="4" fill="#7a7a7a"/><rect x="1" y="4" width="4" height="4" fill="#ffffff"/><rect x="6" y="4" width="4" height="4" fill="#ffffff"/><rect x="11" y="4" width="4" height="4" fill="#ffffff"/><rect x="16" y="4" width="4" height="4" fill="#ffffff"/><rect x="21" y="4" width="4" height="4" fill="#ffffff"/><rect x="1" y="9" width="4" height="4" fill="#ffffff"/><rect x="6" y="9" width="4" height="4" fill="#ffffff"/><rect x="11" y="9" width="4" height="4" fill="#ffffff"/><rect x="16" y="9" width="4" height="4" fill="#ffffff"/><rect x="21" y="9" width="4" height="4" fill="#ffffff"/><rect x="1" y="14" width="4" height="4" fill="#ffffff"/><rect x="6" y="14" width="4" height="4" fill="#ffffff"/><rect x="11" y="14" width="4" height="4" fill="#ffffff"/><rect x="16" y="14" width="4" height="4" fill="#ffffff"/><rect x="21" y="14" width="4" height="4" fill="#ffffff"/><rect x="1" y="19" width="4" height="4" fill="#ffffff"/><rect x="6" y="19" width="4" height="4" fill="#ffffff"/><rect x="11" y="19" width="4" height="4" fill="#ffffff"/><rect x="16" y="19" width="4" height="4" fill="#ffffff"/><rect x="21" y="19" width="4" height="4" fill="#ffffff"/><rect x="5.6" y="8.6" width="4.8" height="4.8" fill="#fffbe6" stroke="#d3863c" stroke-width="1.1"/><circle cx="22" cy="21" r="7.5" fill="#3f77bd" stroke="#f1f1f1" stroke-width="0.8"/><path d="M22 16 L25.5 19.5 L23 19.5 L23 25 L21 25 L21 19.5 L18.5 19.5Z" fill="#fff"/></svg>
<div class="t" style="left:944.0px;width:80px;text-align:center;top:100.68px;font-size:11.6px;line-height:11.6px;color:#444444;font-weight:normal;">Publish</div>
<div class="t" style="left:940.5px;width:80px;text-align:center;top:116.68px;font-size:11.6px;line-height:11.6px;color:#444444;font-weight:normal;">Online</div>
<svg class="b" style="left:1001px;top:119px;" width="6" height="4" viewBox="0 0 6 4"><path d="M0 0 L6 0 L3 3Z" fill="#777"/></svg>
<svg class="b" style="left:1026px;top:64px;" width="34" height="32" viewBox="0 0 34 32"><circle cx="20" cy="5.5" r="5" fill="#5d9e82"/><path d="M12 20 Q12 12 20 12 Q28 12 28 20Z" fill="#5d9e82"/><circle cx="8.5" cy="11" r="5.5" fill="#3d74b5" stroke="#f1f1f1" stroke-width="0.8"/><path d="M0 25 Q0 17 8.5 17 Q17 17 17 25Z" fill="#3d74b5" stroke="#f1f1f1" stroke-width="0.8"/><circle cx="26" cy="19" r="4.5" fill="#e8b860"/><path d="M23 21.5 L15 29 L17 31 L19 29 L20.5 30.5 L22 29 L21 27.5 L25.5 23Z" fill="#e8b860"/><circle cx="27" cy="18" r="1.3" fill="#f1f1f1"/></svg>
<div class="t" style="left:982.7px;width:120px;text-align:center;top:100.68px;font-size:11.6px;line-height:11.6px;color:#444444;font-weight:normal;">Calendar</div>
<div class="t" style="left:982.7px;width:120px;text-align:center;top:116.68px;font-size:11.6px;line-height:11.6px;color:#444444;font-weight:normal;">Permissions</div>
<div class="t" style="left:891.6px;width:150px;text-align:center;top:136.52px;font-size:11.2px;line-height:11.2px;color:#666666;font-weight:normal;">Share</div>
<div class="b" style="left:1086px;top:61px;width:101px;height:21px;background:#fff;border:1px solid #c6c6c6"></div>
<div class="t" style="left:1090px;top:66.93px;font-size:11.3px;line-height:11.3px;color:#a0a0a0;font-weight:normal;">Search People</div>
<svg class="b" style="left:1088px;top:86px;" width="18" height="14" viewBox="0 0 18 14"><g fill="none" stroke="#3d6ea8" stroke-width="1"><rect x="0.5" y="1.5" width="7" height="12"/><rect x="8.5" y="1.5" width="7" height="12"/></g><g stroke="#888"><line x1="2" y1="4" x2="6" y2="4"/><line x1="2" y1="6.5" x2="6" y2="6.5"/><line x1="2" y1="9" x2="6" y2="9"/><line x1="10" y1="4" x2="14" y2="4"/><line x1="10" y1="6.5" x2="14" y2="6.5"/><line x1="10" y1="9" x2="14" y2="9"/></g><rect x="16" y="1" width="2" height="3" fill="#c0504d"/><rect x="16" y="5" width="2" height="3" fill="#4bacc6"/><rect x="16" y="9" width="2" height="3" fill="#3d6ea8"/></svg>
<div class="t" style="left:1108px;top:89.18px;font-size:11.6px;line-height:11.6px;color:#333;font-weight:normal;">Address Book</div>
<div class="t" style="left:1061.4px;width:150px;text-align:center;top:136.52px;font-size:11.2px;line-height:11.2px;color:#666666;font-weight:normal;">Find</div>
<svg class="b" style="left:1322px;top:139px;" width="11" height="7" viewBox="0 0 11 7"><path d="M1 6 L5.5 1.5 L10 6" fill="none" stroke="#666" stroke-width="1.5"/></svg>
<div class="b" style="left:0px;top:151px;width:231px;height:582px;background:linear-gradient(to bottom,#ffffff 0%,#f7f7f7 40%,#f0f0f0 100%)"></div>
<div class="b" style="left:230px;top:159px;width:1px;height:574px;background:#d9d9d9"></div>
<svg class="b" style="left:212px;top:157px;" width="8" height="9" viewBox="0 0 8 9"><path d="M6 1 L2 4.5 L6 8" fill="none" stroke="#666" stroke-width="1.6"/></svg>
<div class="b" style="left:32px;top:156px;width:162px;height:19px;background:#eeeeee"></div>
<div class="t" style="left:53.0px;width:120px;text-align:center;top:160.86px;font-size:10.8px;line-height:10.8px;color:#444;font-weight:bold;">June 2018</div>
<svg class="b" style="left:37px;top:162px;" width="5" height="8" viewBox="0 0 5 8"><path d="M5 0 L0 4 L5 8Z" fill="#444"/></svg>
<svg class="b" style="left:183px;top:162px;" width="5" height="8" viewBox="0 0 5 8"><path d="M0 0 L5 4 L0 8Z" fill="#444"/></svg>
<div class="t" style="left:33.0px;width:23px;text-align:center;top:183.03px;font-size:10.6px;line-height:10.6px;color:#555;font-weight:normal;">SU</div>
<div class="t" style="left:56.0px;width:23px;text-align:center;top:183.03px;font-size:10.6px;line-height:10.6px;color:#555;font-weight:normal;">MO</div>
<div class="t" style="left:79.0px;width:23px;text-align:center;top:183.03px;font-size:10.6px;line-height:10.6px;color:#555;font-weight:normal;">TU</div>
<div class="t" style="left:102.0px;width:23px;text-align:center;top:183.03px;font-size:10.6px;line-height:10.6px;color:#555;font-weight:normal;">WE</div>
<div class="t" style="left:125.0px;width:23px;text-align:center;top:183.03px;font-size:10.6px;line-height:10.6px;color:#555;font-weight:normal;">TH</div>
<div class="t" style="left:148.0px;width:23px;text-align:center;top:183.03px;font-size:10.6px;line-height:10.6px;color:#555;font-weight:normal;">FR</div>
<div class="t" style="left:171.0px;width:23px;text-align:center;top:183.03px;font-size:10.6px;line-height:10.6px;color:#555;font-weight:normal;">SA</div>
<div class="b" style="left:33px;top:200px;width:161px;height:105px;background:#cde6f7"></div>
<div class="t" style="left:27.5px;width:23px;text-align:right;top:204.86px;font-size:10.8px;line-height:10.8px;color:#474747;font-weight:normal;">27</div>
<div class="t" style="left:50.5px;width:23px;text-align:right;top:204.86px;font-size:10.8px;line-height:10.8px;color:#474747;font-weight:normal;">28</div>
<div class="t" style="left:73.5px;width:23px;text-align:right;top:204.86px;font-size:10.8px;line-height:10.8px;color:#3c3c3c;font-weight:bold;">29</div>
<div class="t" style="left:96.5px;width:23px;text-align:right;top:204.86px;font-size:10.8px;line-height:10.8px;color:#3c3c3c;font-weight:bold;">30</div>
<div class="t" style="left:119.5px;width:23px;text-align:right;top:204.86px;font-size:10.8px;line-height:10.8px;color:#3c3c3c;font-weight:bold;">31</div>
<div class="t" style="left:142.5px;width:23px;text-align:right;top:204.86px;font-size:10.8px;line-height:10.8px;color:#3c3c3c;font-weight:bold;">1</div>
<div class="t" style="left:165.5px;width:23px;text-align:right;top:204.86px;font-size:10.8px;line-height:10.8px;color:#474747;font-weight:normal;">2</div>
<div class="t" style="left:27.5px;width:23px;text-align:right;top:225.86px;font-size:10.8px;line-height:10.8px;color:#474747;font-weight:normal;">3</div>
<div class="t" style="left:50.5px;width:23px;text-align:right;top:225.86px;font-size:10.8px;line-height:10.8px;color:#3c3c3c;font-weight:bold;">4</div>
<div class="t" style="left:73.5px;width:23px;text-align:right;top:225.86px;font-size:10.8px;line-height:10.8px;color:#3c3c3c;font-weight:bold;">5</div>
<div class="t" style="left:96.5px;width:23px;text-align:right;top:225.86px;font-size:10.8px;line-height:10.8px;color:#3c3c3c;font-weight:bold;">6</div>
<div class="t" style="left:119.5px;width:23px;text-align:right;top:225.86px;font-size:10.8px;line-height:10.8px;color:#474747;font-weight:normal;">7</div>
<div class="t" style="left:142.5px;width:23px;text-align:right;top:225.86px;font-size:10.8px;line-height:10.8px;color:#3c3c3c;font-weight:bold;">8</div>
<div class="t" style="left:165.5px;width:23px;text-align:right;top:225.86px;font-size:10.8px;line-height:10.8px;color:#474747;font-weight:normal;">9</div>
<div class="t" style="left:27.5px;width:23px;text-align:right;top:246.86px;font-size:10.8px;line-height:10.8px;color:#474747;font-weight:normal;">10</div>
<div class="t" style="left:50.5px;width:23px;text-align:right;top:246.86px;font-size:10.8px;line-height:10.8px;color:#3c3c3c;font-weight:bold;">11</div>
<div class="t" style="left:73.5px;width:23px;text-align:right;top:246.86px;font-size:10.8px;line-height:10.8px;color:#3c3c3c;font-weight:bold;">12</div>
<div class="t" style="left:96.5px;width:23px;text-align:right;top:246.86px;font-size:10.8px;line-height:10.8px;color:#3c3c3c;font-weight:bold;">13</div>
<div class="t" style="left:119.5px;width:23px;text-align:right;top:246.86px;font-size:10.8px;line-height:10.8px;color:#3c3c3c;font-weight:bold;">14</div>
<div class="t" style="left:142.5px;width:23px;text-align:right;top:246.86px;font-size:10.8px;line-height:10.8px;color:#3c3c3c;font-weight:bold;">15</div>
<div class="t" style="left:165.5px;width:23px;text-align:right;top:246.86px;font-size:10.8px;line-height:10.8px;color:#474747;font-weight:normal;">16</div>
<div class="t" style="left:27.5px;width:23px;text-align:right;top:267.86px;font-size:10.8px;line-height:10.8px;color:#474747;font-weight:normal;">17</div>
<div class="t" style="left:50.5px;width:23px;text-align:right;top:267.86px;font-size:10.8px;line-height:10.8px;color:#3c3c3c;font-weight:bold;">18</div>
<div class="t" style="left:73.5px;width:23px;text-align:right;top:267.86px;font-size:10.8px;line-height:10.8px;color:#3c3c3c;font-weight:bold;">19</div>
<div class="b" style="left:102px;top:263px;width:23px;height:21px;background:#0072c6"></div>
<div class="t" style="left:96.5px;width:23px;text-align:right;top:267.86px;font-size:10.8px;line-height:10.8px;color:#fff;font-weight:bold;">20</div>
<div class="t" style="left:119.5px;width:23px;text-align:right;top:267.86px;font-size:10.8px;line-height:10.8px;color:#3c3c3c;font-weight:bold;">21</div>
<div class="t" style="left:142.5px;width:23px;text-align:right;top:267.86px;font-size:10.8px;line-height:10.8px;color:#3c3c3c;font-weight:bold;">22</div>
<div class="t" style="left:165.5px;width:23px;text-align:right;top:267.86px;font-size:10.8px;line-height:10.8px;color:#474747;font-weight:normal;">23</div>
<div class="t" style="left:27.5px;width:23px;text-align:right;top:288.86px;font-size:10.8px;line-height:10.8px;color:#474747;font-weight:normal;">24</div>
<div class="t" style="left:50.5px;width:23px;text-align:right;top:288.86px;font-size:10.8px;line-height:10.8px;color:#3c3c3c;font-weight:bold;">25</div>
<div class="t" style="left:73.5px;width:23px;text-align:right;top:288.86px;font-size:10.8px;line-height:10.8px;color:#3c3c3c;font-weight:bold;">26</div>
<div class="t" style="left:96.5px;width:23px;text-align:right;top:288.86px;font-size:10.8px;line-height:10.8px;color:#3c3c3c;font-weight:bold;">27</div>
<div class="t" style="left:119.5px;width:23px;text-align:right;top:288.86px;font-size:10.8px;line-height:10.8px;color:#474747;font-weight:normal;">28</div>
<div class="t" style="left:142.5px;width:23px;text-align:right;top:288.86px;font-size:10.8px;line-height:10.8px;color:#3c3c3c;font-weight:bold;">29</div>
<div class="t" style="left:165.5px;width:23px;text-align:right;top:288.86px;font-size:10.8px;line-height:10.8px;color:#474747;font-weight:normal;">30</div>
<div class="b" style="left:32px;top:328px;width:162px;height:19px;background:#eeeeee"></div>
<div class="t" style="left:53.0px;width:120px;text-align:center;top:332.86px;font-size:10.8px;line-height:10.8px;color:#444;font-weight:bold;">July 2018</div>
<div class="t" style="left:33.0px;width:23px;text-align:center;top:355.03px;font-size:10.6px;line-height:10.6px;color:#555;font-weight:normal;">SU</div>
<div class="t" style="left:56.0px;width:23px;text-align:center;top:355.03px;font-size:10.6px;line-height:10.6px;color:#555;font-weight:normal;">MO</div>
<div class="t" style="left:79.0px;width:23px;text-align:center;top:355.03px;font-size:10.6px;line-height:10.6px;color:#555;font-weight:normal;">TU</div>
<div class="t" style="left:102.0px;width:23px;text-align:center;top:355.03px;font-size:10.6px;line-height:10.6px;color:#555;font-weight:normal;">WE</div>
<div class="t" style="left:125.0px;width:23px;text-align:center;top:355.03px;font-size:10.6px;line-height:10.6px;color:#555;font-weight:normal;">TH</div>
<div class="t" style="left:148.0px;width:23px;text-align:center;top:355.03px;font-size:10.6px;line-height:10.6px;color:#555;font-weight:normal;">FR</div>
<div class="t" style="left:171.0px;width:23px;text-align:center;top:355.03px;font-size:10.6px;line-height:10.6px;color:#555;font-weight:normal;">SA</div>
<div class="t" style="left:27.5px;width:23px;text-align:right;top:376.86px;font-size:10.8px;line-height:10.8px;color:#474747;font-weight:normal;">1</div>
<div class="t" style="left:50.5px;width:23px;text-align:right;top:376.86px;font-size:10.8px;line-height:10.8px;color:#3c3c3c;font-weight:bold;">2</div>
<div class="t" style="left:73.5px;width:23px;text-align:right;top:376.86px;font-size:10.8px;line-height:10.8px;color:#474747;font-weight:normal;">3</div>
<div class="t" style="left:96.5px;width:23px;text-align:right;top:376.86px;font-size:10.8px;line-height:10.8px;color:#3c3c3c;font-weight:bold;">4</div>
<div class="t" style="left:119.5px;width:23px;text-align:right;top:376.86px;font-size:10.8px;line-height:10.8px;color:#3c3c3c;font-weight:bold;">5</div>
<div class="t" style="left:142.5px;width:23px;text-align:right;top:376.86px;font-size:10.8px;line-height:10.8px;color:#3c3c3c;font-weight:bold;">6</div>
<div class="t" style="left:165.5px;width:23px;text-align:right;top:376.86px;font-size:10.8px;line-height:10.8px;color:#474747;font-weight:normal;">7</div>
<div class="t" style="left:27.5px;width:23px;text-align:right;top:397.86px;font-size:10.8px;line-height:10.8px;color:#474747;font-weight:normal;">8</div>
<div class="t" style="left:50.5px;width:23px;text-align:right;top:397.86px;font-size:10.8px;line-height:10.8px;color:#474747;font-weight:normal;">9</div>
<div class="t" style="left:73.5px;width:23px;text-align:right;top:397.86px;font-size:10.8px;line-height:10.8px;color:#3c3c3c;font-weight:bold;">10</div>
<div class="t" style="left:96.5px;width:23px;text-align:right;top:397.86px;font-size:10.8px;line-height:10.8px;color:#3c3c3c;font-weight:bold;">11</div>
<div class="t" style="left:119.5px;width:23px;text-align:right;top:397.86px;font-size:10.8px;line-height:10.8px;color:#3c3c3c;font-weight:bold;">12</div>
<div class="t" style="left:142.5px;width:23px;text-align:right;top:397.86px;font-size:10.8px;line-height:10.8px;color:#3c3c3c;font-weight:bold;">13</div>
<div class="t" style="left:165.5px;width:23px;text-align:right;top:397.86px;font-size:10.8px;line-height:10.8px;color:#474747;font-weight:normal;">14</div>
<div class="t" style="left:27.5px;width:23px;text-align:right;top:418.86px;font-size:10.8px;line-height:10.8px;color:#474747;font-weight:normal;">15</div>
<div class="t" style="left:50.5px;width:23px;text-align:right;top:418.86px;font-size:10.8px;line-height:10.8px;color:#474747;font-weight:normal;">16</div>
<div class="t" style="left:73.5px;width:23px;text-align:right;top:418.86px;font-size:10.8px;line-height:10.8px;color:#474747;font-weight:normal;">17</div>
<div class="t" style="left:96.5px;width:23px;text-align:right;top:418.86px;font-size:10.8px;line-height:10.8px;color:#3c3c3c;font-weight:bold;">18</div>
<div class="t" style="left:119.5px;width:23px;text-align:right;top:418.86px;font-size:10.8px;line-height:10.8px;color:#474747;font-weight:normal;">19</div>
<div class="t" style="left:142.5px;width:23px;text-align:right;top:418.86px;font-size:10.8px;line-height:10.8px;color:#3c3c3c;font-weight:bold;">20</div>
<div class="t" style="left:165.5px;width:23px;text-align:right;top:418.86px;font-size:10.8px;line-height:10.8px;color:#474747;font-weight:normal;">21</div>
<div class="t" style="left:27.5px;width:23px;text-align:right;top:439.86px;font-size:10.8px;line-height:10.8px;color:#474747;font-weight:normal;">22</div>
<div class="t" style="left:50.5px;width:23px;text-align:right;top:439.86px;font-size:10.8px;line-height:10.8px;color:#474747;font-weight:normal;">23</div>
<div class="t" style="left:73.5px;width:23px;text-align:right;top:439.86px;font-size:10.8px;line-height:10.8px;color:#474747;font-weight:normal;">24</div>
<div class="t" style="left:96.5px;width:23px;text-align:right;top:439.86px;font-size:10.8px;line-height:10.8px;color:#3c3c3c;font-weight:bold;">25</div>
<div class="t" style="left:119.5px;width:23px;text-align:right;top:439.86px;font-size:10.8px;line-height:10.8px;color:#3c3c3c;font-weight:bold;">26</div>
<div class="t" style="left:142.5px;width:23px;text-align:right;top:439.86px;font-size:10.8px;line-height:10.8px;color:#3c3c3c;font-weight:bold;">27</div>
<div class="t" style="left:165.5px;width:23px;text-align:right;top:439.86px;font-size:10.8px;line-height:10.8px;color:#474747;font-weight:normal;">28</div>
<div class="t" style="left:27.5px;width:23px;text-align:right;top:460.86px;font-size:10.8px;line-height:10.8px;color:#474747;font-weight:normal;">29</div>
<div class="t" style="left:50.5px;width:23px;text-align:right;top:460.86px;font-size:10.8px;line-height:10.8px;color:#474747;font-weight:normal;">30</div>
<div class="t" style="left:73.5px;width:23px;text-align:right;top:460.86px;font-size:10.8px;line-height:10.8px;color:#474747;font-weight:normal;">31</div>
<div class="t" style="left:96.5px;width:23px;text-align:right;top:460.86px;font-size:10.8px;line-height:10.8px;color:#3c3c3c;font-weight:bold;">1</div>
<div class="t" style="left:119.5px;width:23px;text-align:right;top:460.86px;font-size:10.8px;line-height:10.8px;color:#474747;font-weight:normal;">2</div>
<div class="t" style="left:142.5px;width:23px;text-align:right;top:460.86px;font-size:10.8px;line-height:10.8px;color:#474747;font-weight:normal;">3</div>
<div class="t" style="left:165.5px;width:23px;text-align:right;top:460.86px;font-size:10.8px;line-height:10.8px;color:#474747;font-weight:normal;">4</div>
<div class="t" style="left:27.5px;width:23px;text-align:right;top:481.86px;font-size:10.8px;line-height:10.8px;color:#474747;font-weight:normal;">5</div>
<div class="t" style="left:50.5px;width:23px;text-align:right;top:481.86px;font-size:10.8px;line-height:10.8px;color:#474747;font-weight:normal;">6</div>
<div class="t" style="left:73.5px;width:23px;text-align:right;top:481.86px;font-size:10.8px;line-height:10.8px;color:#474747;font-weight:normal;">7</div>
<div class="t" style="left:96.5px;width:23px;text-align:right;top:481.86px;font-size:10.8px;line-height:10.8px;color:#3c3c3c;font-weight:bold;">8</div>
<div class="t" style="left:119.5px;width:23px;text-align:right;top:481.86px;font-size:10.8px;line-height:10.8px;color:#474747;font-weight:normal;">9</div>
<div class="t" style="left:142.5px;width:23px;text-align:right;top:481.86px;font-size:10.8px;line-height:10.8px;color:#474747;font-weight:normal;">10</div>
<div class="t" style="left:165.5px;width:23px;text-align:right;top:481.86px;font-size:10.8px;line-height:10.8px;color:#474747;font-weight:normal;">11</div>
<div class="b" style="left:6px;top:506px;width:224px;height:1px;background:#cfcfcf"></div>
<div class="b" style="left:6px;top:507px;width:224px;height:3px;background:#ffffff"></div>
<div class="b" style="left:0;top:510px;width:230px;height:181px;overflow:hidden;background:#f0f0f0">
<div class="b" style="left:6px;top:110px;width:203px;height:23px;background:#dcefdc"></div>
<div class="b" style="left:41px;top:-6.0px;width:13px;height:13px;background:#fff;border:1px solid #8a8a8a"></div>
<div class="t" style="left:59px;top:-5.20px;font-size:11.7px;line-height:11.7px;color:#333;font-weight:normal">Price, Curtis</div>
<div class="b" style="left:41px;top:18.0px;width:13px;height:13px;background:#fff;border:1px solid #8a8a8a"></div>
<div class="t" style="left:59px;top:18.80px;font-size:11.7px;line-height:11.7px;color:#333;font-weight:normal">Reany, Tori</div>
<div class="b" style="left:41px;top:42.1px;width:13px;height:13px;background:#fff;border:1px solid #8a8a8a"></div>
<div class="t" style="left:59px;top:42.90px;font-size:11.7px;line-height:11.7px;color:#333;font-weight:normal">Personal</div>
<div class="b" style="left:41px;top:65.5px;width:13px;height:13px;background:#fff;border:1px solid #8a8a8a"></div>
<div class="t" style="left:59px;top:66.30px;font-size:11.7px;line-height:11.7px;color:#333;font-weight:normal">Calendar - ITStraining</div>
<div class="b" style="left:41px;top:90.3px;width:13px;height:13px;background:#fff;border:1px solid #8a8a8a"></div>
<div class="t" style="left:59px;top:91.10px;font-size:11.7px;line-height:11.7px;color:#333;font-weight:normal">Testing Group Calendar</div>
<div class="b" style="left:41px;top:114.2px;width:13px;height:13px;background:#fff;border:1px solid #8a8a8a"></div>
<div class="t" style="left:59px;top:115.00px;font-size:11.7px;line-height:11.7px;color:#333;font-weight:bold">Testing</div>
<svg class="b" style="left:42px;top:114px" width="11" height="11"><path d="M2 5.5 L4.5 8.5 L9.5 2" fill="none" stroke="#444" stroke-width="1.2"/></svg>
</div>
<svg class="b" style="left:12px;top:669px;" width="6" height="11" viewBox="0 0 6 11"><path d="M0.5 0.5 L5 5.5 L0.5 10.5Z" fill="none" stroke="#777" stroke-width="1"/></svg>
<div class="b" style="left:22px;top:669px;width:13px;height:13px;background:#fff;border:1px solid #8a8a8a"></div>
<div class="t" style="left:40.3px;top:668.31px;font-size:14.4px;line-height:14.4px;color:#333;font-weight:normal;">Other Calendars</div>
<div class="b" style="left:0px;top:691px;width:231px;height:42px;background:#e6e6e6;border-top:1px solid #d6d6d6"></div>
<div class="b" style="left:42px;top:692px;width:42px;height:41px;background:#dedede"></div>
<svg class="b" style="left:13px;top:705px;" width="17" height="14" viewBox="0 0 17 14"><rect x="0" y="0" width="17" height="14" fill="#555"/><path d="M0 0.5 L8.5 7 L17 0.5" fill="none" stroke="#e6e6e6" stroke-width="1.4"/></svg>
<svg class="b" style="left:55px;top:707px;" width="16" height="13" viewBox="0 0 16 13"><rect x="0" y="0" width="16" height="2" fill="#0072c6"/><rect x="0.0" y="3.0" width="2" height="1.8" fill="#0072c6"/><rect x="3.1" y="3.0" width="2" height="1.8" fill="#0072c6"/><rect x="6.2" y="3.0" width="2" height="1.8" fill="#0072c6"/><rect x="9.3" y="3.0" width="2" height="1.8" fill="#0072c6"/><rect x="12.4" y="3.0" width="2" height="1.8" fill="#0072c6"/><rect x="15.5" y="3.0" width="2" height="1.8" fill="#0072c6"/><rect x="0.0" y="5.6" width="2" height="1.8" fill="#0072c6"/><rect x="3.1" y="5.6" width="2" height="1.8" fill="#0072c6"/><rect x="6.2" y="5.6" width="2" height="1.8" fill="#0072c6"/><rect x="9.3" y="5.6" width="2" height="1.8" fill="#0072c6"/><rect x="12.4" y="5.6" width="2" height="1.8" fill="#0072c6"/><rect x="15.5" y="5.6" width="2" height="1.8" fill="#0072c6"/><rect x="0.0" y="8.2" width="2" height="1.8" fill="#0072c6"/><rect x="3.1" y="8.2" width="2" height="1.8" fill="#0072c6"/><rect x="6.2" y="8.2" width="2" height="1.8" fill="#0072c6"/><rect x="9.3" y="8.2" width="2" height="1.8" fill="#0072c6"/><rect x="12.4" y="8.2" width="2" height="1.8" fill="#0072c6"/><rect x="15.5" y="8.2" width="2" height="1.8" fill="#0072c6"/><rect x="0.0" y="10.8" width="2" height="1.8" fill="#0072c6"/><rect x="3.1" y="10.8" width="2" height="1.8" fill="#0072c6"/><rect x="6.2" y="10.8" width="2" height="1.8" fill="#0072c6"/><rect x="9.3" y="10.8" width="2" height="1.8" fill="#0072c6"/><rect x="12.4" y="10.8" width="2" height="1.8" fill="#0072c6"/><rect x="15.5" y="10.8" width="2" height="1.8" fill="#0072c6"/></svg>
<svg class="b" style="left:96px;top:706px;" width="17" height="13" viewBox="0 0 17 13"><circle cx="12" cy="3.5" r="3" fill="#555"/><path d="M7 13 Q7 7.5 12 7.5 Q17 7.5 17 13Z" fill="#555"/><circle cx="5" cy="5" r="3" fill="#555" stroke="#e6e6e6" stroke-width="0.8"/><path d="M0 13 Q0 9 5 9 Q10 9 10 13Z" fill="#555" stroke="#e6e6e6" stroke-width="0.8"/></svg>
<svg class="b" style="left:140px;top:704px;" width="14" height="17" viewBox="0 0 14 17"><rect x="1" y="3" width="12" height="13.5" fill="none" stroke="#555" stroke-width="1.8"/><rect x="4" y="1" width="6" height="3.5" fill="#555"/><path d="M4 9.5 L6.5 12 L10 6.5" fill="none" stroke="#555" stroke-width="1.2"/></svg>
<div class="b" style="left:179.6px;top:710.6px;width:4.2px;height:4.2px;border-radius:50%;background:#555"></div>
<div class="b" style="left:188.1px;top:710.6px;width:4.2px;height:4.2px;border-radius:50%;background:#555"></div>
<div class="b" style="left:196.6px;top:710.6px;width:4.2px;height:4.2px;border-radius:50%;background:#555"></div>
<div class="b" style="left:0px;top:733px;width:1341px;height:23px;background:#f0f0f0;border-top:1px solid #c8c8c8"></div>
<div class="t" style="left:8.4px;top:738.97px;font-size:10.9px;line-height:10.9px;color:#444;font-weight:normal;">Items: 1</div>
<svg class="b" style="left:88px;top:738px;" width="12" height="13" viewBox="0 0 12 13"><path d="M2 9 Q2 2 6 2 Q10 2 10 9Z" fill="#666"/><rect x="0" y="9" width="12" height="1.4" fill="#666"/><path d="M4.5 11.5 L7.5 11.5 L6 13Z" fill="#666"/></svg>
<div class="t" style="left:104.5px;top:738.89px;font-size:11px;line-height:11px;color:#444;font-weight:normal;">Reminders: 70</div>
<div class="t" style="left:890.3px;top:739.08px;font-size:11.72px;line-height:11.72px;color:#444;font-weight:normal;">Online with: Microsoft Exchange</div>
<div class="b" style="left:1077px;top:734px;width:38px;height:22px;background:#c8c8c8"></div>
<svg class="b" style="left:1088px;top:738px;" width="16" height="13" viewBox="0 0 16 13"><rect x="0.5" y="0.5" width="15" height="12" fill="none" stroke="#555"/><line x1="4.5" y1="0.5" x2="4.5" y2="12.5" stroke="#555"/></svg>
<svg class="b" style="left:1126px;top:738px;" width="15" height="13" viewBox="0 0 15 13"><g fill="none" stroke="#555"><path d="M0.5 1.5 L6.5 1.5 L7.5 2.5 L8.5 1.5 L14.5 1.5 L14.5 11.5 L8.5 11.5 L7.5 12.5 L6.5 11.5 L0.5 11.5Z"/><line x1="7.5" y1="2.5" x2="7.5" y2="11.5"/><line x1="2" y1="4" x2="6" y2="4"/><line x1="2" y1="6" x2="6" y2="6"/><line x1="2" y1="8" x2="6" y2="8"/><line x1="9" y1="4" x2="13" y2="4"/><line x1="9" y1="6" x2="13" y2="6"/><line x1="9" y1="8" x2="13" y2="8"/></g></svg>
<div class="b" style="left:1158px;top:744px;width:6px;height:2px;background:#555"></div>
<div class="b" style="left:1169px;top:744px;width:99px;height:1px;background:#aaa"></div>
<div class="b" style="left:1216px;top:739px;width:4px;height:11px;background:#555"></div>
<div class="b" style="left:1272px;top:744px;width:8px;height:2px;background:#555"></div>
<div class="b" style="left:1275px;top:741px;width:2px;height:8px;background:#555"></div>
<div class="t" style="left:1263.5px;width:60px;text-align:right;top:738.69px;font-size:11px;line-height:11px;color:#555;font-weight:normal;">100%</div>
<svg class="b" style="left:251px;top:169px;" width="7" height="10" viewBox="0 0 7 10"><path d="M7 0 L0 5 L7 10Z" fill="#555"/></svg>
<svg class="b" style="left:277px;top:169px;" width="7" height="10" viewBox="0 0 7 10"><path d="M0 0 L7 5 L0 10Z" fill="#555"/></svg>
<div class="t" style="left:304px;top:165.41px;font-size:19.6px;line-height:19.6px;color:#3a3a3a;font-weight:normal;letter-spacing:-0.4px">June 2018</div>
<div class="t" style="left:866px;top:161.05px;font-size:11.4px;line-height:11.4px;color:#444;font-weight:normal;clip-path:inset(0 0 0 0)">morrow</div>
<div class="t" style="left:866px;top:176.20px;font-size:11.1px;line-height:11.1px;color:#333;font-weight:bold;">°F / 72° F</div>
<svg class="b" style="left:932px;top:161px;" width="23" height="21" viewBox="0 0 23 21"><path d="M5 11.5 Q1 11.5 1 8.5 Q1 5.5 4.5 5.5 Q5.5 1 10.5 1 Q15.5 1 16 5.5 Q20 5.5 20 8.5 Q20 11.5 16.5 11.5Z" fill="none" stroke="#555" stroke-width="1"/><g fill="#1f8bd6"><rect x="5" y="13.5" width="1.6" height="2.5"/><rect x="9" y="13.5" width="1.6" height="2.5"/><rect x="13" y="13.5" width="1.6" height="2.5"/><rect x="7" y="17" width="1.6" height="2.5"/><rect x="11" y="17" width="1.6" height="2.5"/></g></svg>
<div class="t" style="left:966.3px;top:161.05px;font-size:11.4px;line-height:11.4px;color:#444;font-weight:normal;">Friday</div>
<div class="t" style="left:966.3px;top:176.20px;font-size:11.1px;line-height:11.1px;color:#333;font-weight:bold;">77° F / 71° F</div>
<div class="b" style="left:1057px;top:165px;width:279px;height:20px;border:1px solid #ababab;background:#fff"></div>
<div class="t" style="left:1064px;top:169.56px;font-size:11.15px;line-height:11.15px;color:#555;font-weight:normal;">Search Testing (Ctrl+E)</div>
<svg class="b" style="left:1311px;top:168px;" width="13" height="13" viewBox="0 0 13 13"><circle cx="7.5" cy="5.5" r="4.3" fill="none" stroke="#2c6fb7" stroke-width="1.6"/><line x1="4.6" y1="8.4" x2="1" y2="12" stroke="#2c6fb7" stroke-width="2"/></svg>
<div class="b" style="left:1325px;top:236px;width:16px;height:497px;background:#f1f1f1"></div>
<div class="b" style="left:1326px;top:221px;width:15px;height:15px;border:1.5px solid #a6a6a6;background:#fff"></div>
<svg class="b" style="left:1329.5px;top:226px;" width="8" height="5" viewBox="0 0 8 5"><path d="M0 5 L4 0.5 L8 5Z" fill="#666"/></svg>
<div class="b" style="left:1326px;top:459px;width:15px;height:22px;border:1.5px solid #a6a6a6;background:#fff"></div>
<div class="b" style="left:1326px;top:717px;width:15px;height:15px;border:1.5px solid #a6a6a6;background:#fff"></div>
<svg class="b" style="left:1329.5px;top:722px;" width="8" height="5" viewBox="0 0 8 5"><path d="M0 0 L4 4.5 L8 0Z" fill="#666"/></svg>
<svg class="b" style="left:240px;top:197px;" width="209" height="22" viewBox="0 0 209 22"><path d="M0 0 L199 0 L208 22 L0 22Z" fill="#dcf0fb"/></svg>
<div class="b" style="left:240px;top:219px;width:532px;height:24px;background:#dcf0fb"></div>
<div class="b" style="left:468px;top:219px;width:76px;height:24px;background:#8db6e0"></div>
<div class="t" style="left:251px;top:226.49px;font-size:11px;line-height:11px;color:#444;font-weight:normal;">SUN</div>
<div class="t" style="left:327px;top:226.49px;font-size:11px;line-height:11px;color:#444;font-weight:normal;">MON</div>
<div class="t" style="left:403px;top:226.49px;font-size:11px;line-height:11px;color:#444;font-weight:normal;">TUE</div>
<div class="t" style="left:479px;top:226.49px;font-size:11px;line-height:11px;color:#ffffff;font-weight:bold;">WED</div>
<div class="t" style="left:555px;top:226.49px;font-size:11px;line-height:11px;color:#444;font-weight:normal;">THU</div>
<div class="t" style="left:631px;top:226.49px;font-size:11px;line-height:11px;color:#444;font-weight:normal;">FRI</div>
<div class="t" style="left:707px;top:226.49px;font-size:11px;line-height:11px;color:#444;font-weight:normal;">SAT</div>
<div class="b" style="left:240px;top:243px;width:1px;height:490px;background:#e1e1e1"></div>
<div class="b" style="left:316px;top:243px;width:1px;height:490px;background:#e1e1e1"></div>
<div class="b" style="left:392px;top:243px;width:1px;height:490px;background:#e1e1e1"></div>
<div class="b" style="left:468px;top:243px;width:1px;height:490px;background:#e1e1e1"></div>
<div class="b" style="left:544px;top:243px;width:1px;height:490px;background:#e1e1e1"></div>
<div class="b" style="left:620px;top:243px;width:1px;height:490px;background:#e1e1e1"></div>
<div class="b" style="left:696px;top:243px;width:1px;height:490px;background:#e1e1e1"></div>
<div class="b" style="left:771px;top:243px;width:1px;height:490px;background:#e1e1e1"></div>
<div class="b" style="left:240px;top:341px;width:532px;height:1px;background:#e1e1e1"></div>
<div class="b" style="left:240px;top:439px;width:532px;height:1px;background:#e1e1e1"></div>
<div class="b" style="left:240px;top:537px;width:532px;height:1px;background:#e1e1e1"></div>
<div class="b" style="left:240px;top:635px;width:532px;height:1px;background:#e1e1e1"></div>
<div class="b" style="left:240px;top:733px;width:532px;height:1px;background:#e1e1e1"></div>
<div class="b" style="left:469px;top:538px;width:75px;height:4px;background:#8db6e0"></div>
<div class="t" style="left:250.5px;top:202.35px;font-size:11.4px;line-height:11.4px;color:#262626;font-weight:normal;">Calendar - nglick@siue.edu</div>
<svg class="b" style="left:405px;top:204px;" width="10" height="10" viewBox="0 0 10 10"><path d="M1 1 L9 9 M9 1 L1 9" stroke="#555" stroke-width="2"/></svg>
<svg class="b" style="left:792px;top:197px;" width="121" height="22" viewBox="0 0 121 22"><path d="M0 0 L111 0 L120 22 L0 22Z" fill="#ddf1dd"/></svg>
<div class="b" style="left:792px;top:219px;width:532px;height:24px;background:#ddf1dd"></div>
<div class="b" style="left:1020px;top:219px;width:76px;height:24px;background:#84cc8c"></div>
<div class="t" style="left:803px;top:226.49px;font-size:11px;line-height:11px;color:#444;font-weight:normal;">SUN</div>
<div class="t" style="left:879px;top:226.49px;font-size:11px;line-height:11px;color:#444;font-weight:normal;">MON</div>
<div class="t" style="left:955px;top:226.49px;font-size:11px;line-height:11px;color:#444;font-weight:normal;">TUE</div>
<div class="t" style="left:1031px;top:226.49px;font-size:11px;line-height:11px;color:#ffffff;font-weight:bold;">WED</div>
<div class="t" style="left:1107px;top:226.49px;font-size:11px;line-height:11px;color:#444;font-weight:normal;">THU</div>
<div class="t" style="left:1183px;top:226.49px;font-size:11px;line-height:11px;color:#444;font-weight:normal;">FRI</div>
<div class="t" style="left:1259px;top:226.49px;font-size:11px;line-height:11px;color:#444;font-weight:normal;">SAT</div>
<div class="b" style="left:792px;top:243px;width:1px;height:490px;background:#e1e1e1"></div>
<div class="b" style="left:868px;top:243px;width:1px;height:490px;background:#e1e1e1"></div>
<div class="b" style="left:944px;top:243px;width:1px;height:490px;background:#e1e1e1"></div>
<div class="b" style="left:1020px;top:243px;width:1px;height:490px;background:#e1e1e1"></div>
<div class="b" style="left:1096px;top:243px;width:1px;height:490px;background:#e1e1e1"></div>
<div class="b" style="left:1172px;top:243px;width:1px;height:490px;background:#e1e1e1"></div>
<div class="b" style="left:1248px;top:243px;width:1px;height:490px;background:#e1e1e1"></div>
<div class="b" style="left:1324px;top:243px;width:1px;height:490px;background:#e1e1e1"></div>
<div class="b" style="left:792px;top:341px;width:532px;height:1px;background:#e1e1e1"></div>
<div class="b" style="left:792px;top:439px;width:532px;height:1px;background:#e1e1e1"></div>
<div class="b" style="left:792px;top:537px;width:532px;height:1px;background:#e1e1e1"></div>
<div class="b" style="left:792px;top:635px;width:532px;height:1px;background:#e1e1e1"></div>
<div class="b" style="left:792px;top:733px;width:532px;height:1px;background:#e1e1e1"></div>
<div class="b" style="left:1021px;top:538px;width:75px;height:4px;background:#84cc8c"></div>
<div class="t" style="left:800px;top:202.35px;font-size:11.4px;line-height:11.4px;color:#262626;font-weight:normal;">Testing</div>
<svg class="b" style="left:879px;top:203px;" width="10" height="10" viewBox="0 0 10 10"><path d="M1 1 L9 9 M9 1 L1 9" stroke="#555" stroke-width="2"/></svg>
<div class="t" style="left:248.5px;top:252.78px;font-size:14.2px;line-height:14.2px;color:#444;font-weight:normal;">May 27</div>
<div class="t" style="left:324.5px;top:252.78px;font-size:14.2px;line-height:14.2px;color:#444;font-weight:normal;">28</div>
<div class="t" style="left:400.5px;top:252.78px;font-size:14.2px;line-height:14.2px;color:#444;font-weight:normal;">29</div>
<div class="t" style="left:476.5px;top:252.78px;font-size:14.2px;line-height:14.2px;color:#444;font-weight:normal;">30</div>
<div class="t" style="left:552.5px;top:252.78px;font-size:14.2px;line-height:14.2px;color:#444;font-weight:normal;">31</div>
<div class="t" style="left:628.5px;top:252.78px;font-size:14.2px;line-height:14.2px;color:#333;font-weight:bold;">Jun 1</div>
<div class="t" style="left:704.5px;top:252.78px;font-size:14.2px;line-height:14.2px;color:#444;font-weight:normal;">2</div>
<div class="t" style="left:248.5px;top:350.78px;font-size:14.2px;line-height:14.2px;color:#444;font-weight:normal;">3</div>
<div class="t" style="left:324.5px;top:350.78px;font-size:14.2px;line-height:14.2px;color:#444;font-weight:normal;">4</div>
<div class="t" style="left:400.5px;top:350.78px;font-size:14.2px;line-height:14.2px;color:#444;font-weight:normal;">5</div>
<div class="t" style="left:476.5px;top:350.78px;font-size:14.2px;line-height:14.2px;color:#444;font-weight:normal;">6</div>
<div class="t" style="left:552.5px;top:350.78px;font-size:14.2px;line-height:14.2px;color:#444;font-weight:normal;">7</div>
<div class="t" style="left:628.5px;top:350.78px;font-size:14.2px;line-height:14.2px;color:#444;font-weight:normal;">8</div>
<div class="t" style="left:704.5px;top:350.78px;font-size:14.2px;line-height:14.2px;color:#444;font-weight:normal;">9</div>
<div class="t" style="left:248.5px;top:448.78px;font-size:14.2px;line-height:14.2px;color:#444;font-weight:normal;">10</div>
<div class="t" style="left:324.5px;top:448.78px;font-size:14.2px;line-height:14.2px;color:#444;font-weight:normal;">11</div>
<div class="t" style="left:400.5px;top:448.78px;font-size:14.2px;line-height:14.2px;color:#444;font-weight:normal;">12</div>
<div class="t" style="left:476.5px;top:448.78px;font-size:14.2px;line-height:14.2px;color:#444;font-weight:normal;">13</div>
<div class="t" style="left:552.5px;top:448.78px;font-size:14.2px;line-height:14.2px;color:#444;font-weight:normal;">14</div>
<div class="t" style="left:628.5px;top:448.78px;font-size:14.2px;line-height:14.2px;color:#444;font-weight:normal;">15</div>
<div class="t" style="left:704.5px;top:448.78px;font-size:14.2px;line-height:14.2px;color:#444;font-weight:normal;">16</div>
<div class="t" style="left:248.5px;top:546.78px;font-size:14.2px;line-height:14.2px;color:#444;font-weight:normal;">17</div>
<div class="t" style="left:324.5px;top:546.78px;font-size:14.2px;line-height:14.2px;color:#444;font-weight:normal;">18</div>
<div class="t" style="left:400.5px;top:546.78px;font-size:14.2px;line-height:14.2px;color:#444;font-weight:normal;">19</div>
<div class="t" style="left:476.5px;top:546.78px;font-size:14.2px;line-height:14.2px;color:#4a90d0;font-weight:bold;">20</div>
<div class="t" style="left:552.5px;top:546.78px;font-size:14.2px;line-height:14.2px;color:#444;font-weight:normal;">21</div>
<div class="t" style="left:628.5px;top:546.78px;font-size:14.2px;line-height:14.2px;color:#444;font-weight:normal;">22</div>
<div class="t" style="left:704.5px;top:546.78px;font-size:14.2px;line-height:14.2px;color:#444;font-weight:normal;">23</div>
<div class="t" style="left:248.5px;top:644.78px;font-size:14.2px;line-height:14.2px;color:#444;font-weight:normal;">24</div>
<div class="t" style="left:324.5px;top:644.78px;font-size:14.2px;line-height:14.2px;color:#444;font-weight:normal;">25</div>
<div class="t" style="left:400.5px;top:644.78px;font-size:14.2px;line-height:14.2px;color:#444;font-weight:normal;">26</div>
<div class="t" style="left:476.5px;top:644.78px;font-size:14.2px;line-height:14.2px;color:#444;font-weight:normal;">27</div>
<div class="t" style="left:552.5px;top:644.78px;font-size:14.2px;line-height:14.2px;color:#444;font-weight:normal;">28</div>
<div class="t" style="left:628.5px;top:644.78px;font-size:14.2px;line-height:14.2px;color:#444;font-weight:normal;">29</div>
<div class="t" style="left:704.5px;top:644.78px;font-size:14.2px;line-height:14.2px;color:#444;font-weight:normal;">30</div>
<div class="t" style="left:800.5px;top:252.78px;font-size:14.2px;line-height:14.2px;color:#444;font-weight:normal;">May 27</div>
<div class="t" style="left:876.5px;top:252.78px;font-size:14.2px;line-height:14.2px;color:#444;font-weight:normal;">28</div>
<div class="t" style="left:952.5px;top:252.78px;font-size:14.2px;line-height:14.2px;color:#444;font-weight:normal;">29</div>
<div class="t" style="left:1028.5px;top:252.78px;font-size:14.2px;line-height:14.2px;color:#444;font-weight:normal;">30</div>
<div class="t" style="left:1104.5px;top:252.78px;font-size:14.2px;line-height:14.2px;color:#444;font-weight:normal;">31</div>
<div class="t" style="left:1180.5px;top:252.78px;font-size:14.2px;line-height:14.2px;color:#333;font-weight:bold;">Jun 1</div>
<div class="t" style="left:1256.5px;top:252.78px;font-size:14.2px;line-height:14.2px;color:#444;font-weight:normal;">2</div>
<div class="t" style="left:800.5px;top:350.78px;font-size:14.2px;line-height:14.2px;color:#444;font-weight:normal;">3</div>
<div class="t" style="left:876.5px;top:350.78px;font-size:14.2px;line-height:14.2px;color:#444;font-weight:normal;">4</div>
<div class="t" style="left:952.5px;top:350.78px;font-size:14.2px;line-height:14.2px;color:#444;font-weight:normal;">5</div>
<div class="t" style="left:1028.5px;top:350.78px;font-size:14.2px;line-height:14.2px;color:#444;font-weight:normal;">6</div>
<div class="t" style="left:1104.5px;top:350.78px;font-size:14.2px;line-height:14.2px;color:#444;font-weight:normal;">7</div>
<div class="t" style="left:1180.5px;top:350.78px;font-size:14.2px;line-height:14.2px;color:#444;font-weight:normal;">8</div>
<div class="t" style="left:1256.5px;top:350.78px;font-size:14.2px;line-height:14.2px;color:#444;font-weight:normal;">9</div>
<div class="t" style="left:800.5px;top:448.78px;font-size:14.2px;line-height:14.2px;color:#444;font-weight:normal;">10</div>
<div class="t" style="left:876.5px;top:448.78px;font-size:14.2px;line-height:14.2px;color:#444;font-weight:normal;">11</div>
<div class="t" style="left:952.5px;top:448.78px;font-size:14.2px;line-height:14.2px;color:#444;font-weight:normal;">12</div>
<div class="t" style="left:1028.5px;top:448.78px;font-size:14.2px;line-height:14.2px;color:#444;font-weight:normal;">13</div>
<div class="t" style="left:1104.5px;top:448.78px;font-size:14.2px;line-height:14.2px;color:#444;font-weight:normal;">14</div>
<div class="t" style="left:1180.5px;top:448.78px;font-size:14.2px;line-height:14.2px;color:#444;font-weight:normal;">15</div>
<div class="t" style="left:1256.5px;top:448.78px;font-size:14.2px;line-height:14.2px;color:#444;font-weight:normal;">16</div>
<div class="t" style="left:800.5px;top:546.78px;font-size:14.2px;line-height:14.2px;color:#444;font-weight:normal;">17</div>
<div class="t" style="left:876.5px;top:546.78px;font-size:14.2px;line-height:14.2px;color:#444;font-weight:normal;">18</div>
<div class="t" style="left:952.5px;top:546.78px;font-size:14.2px;line-height:14.2px;color:#444;font-weight:normal;">19</div>
<div class="t" style="left:1028.5px;top:546.78px;font-size:14.2px;line-height:14.2px;color:#7dc88a;font-weight:bold;">20</div>
<div class="t" style="left:1104.5px;top:546.78px;font-size:14.2px;line-height:14.2px;color:#444;font-weight:normal;">21</div>
<div class="t" style="left:1180.5px;top:546.78px;font-size:14.2px;line-height:14.2px;color:#444;font-weight:normal;">22</div>
<div class="t" style="left:1256.5px;top:546.78px;font-size:14.2px;line-height:14.2px;color:#444;font-weight:normal;">23</div>
<div class="t" style="left:800.5px;top:644.78px;font-size:14.2px;line-height:14.2px;color:#444;font-weight:normal;">24</div>
<div class="t" style="left:876.5px;top:644.78px;font-size:14.2px;line-height:14.2px;color:#444;font-weight:normal;">25</div>
<div class="t" style="left:952.5px;top:644.78px;font-size:14.2px;line-height:14.2px;color:#444;font-weight:normal;">26</div>
<div class="t" style="left:1028.5px;top:644.78px;font-size:14.2px;line-height:14.2px;color:#444;font-weight:normal;">27</div>
<div class="t" style="left:1104.5px;top:644.78px;font-size:14.2px;line-height:14.2px;color:#444;font-weight:normal;">28</div>
<div class="t" style="left:1180.5px;top:644.78px;font-size:14.2px;line-height:14.2px;color:#444;font-weight:normal;">29</div>
<div class="t" style="left:1256.5px;top:644.78px;font-size:14.2px;line-height:14.2px;color:#444;font-weight:normal;">30</div>
<div class="b" style="left:393px;top:274px;width:66px;height:31px;background:#c0e4f8"></div>
<div class="b" style="left:393px;top:274px;width:7px;height:31px;background:#92bde6"></div>
<div class="t" style="left:403.5px;top:276.11px;font-size:10.5px;line-height:10.5px;color:#1a1a1a;font-weight:normal;">11:00am</div>
<div class="t" style="left:403.5px;top:288.91px;font-size:10.5px;line-height:10.5px;color:#1a1a1a;font-weight:normal;">CMIS 260</div>
<div class="b" style="left:393px;top:306px;width:66px;height:18px;background:#c0e4f8"></div>
<div class="b" style="left:393px;top:306px;width:7px;height:18px;background:#92bde6"></div>
<div class="t" style="left:403.5px;top:308.11px;font-size:10.5px;line-height:10.5px;color:#1a1a1a;font-weight:normal;">12:30pm</div>
<div class="b" style="left:469px;top:274px;width:66px;height:31px;background:#c0e4f8"></div>
<div class="b" style="left:469px;top:274px;width:7px;height:31px;background:#92bde6"></div>
<div class="t" style="left:479.5px;top:276.11px;font-size:10.5px;line-height:10.5px;color:#1a1a1a;font-weight:normal;">11:00am</div>
<div class="t" style="left:479.5px;top:288.91px;font-size:10.5px;line-height:10.5px;color:#1a1a1a;font-weight:normal;">CMIS 260</div>
<div class="b" style="left:469px;top:306px;width:66px;height:18px;background:#c0e4f8"></div>
<div class="b" style="left:469px;top:306px;width:7px;height:18px;background:#92bde6"></div>
<div class="t" style="left:479.5px;top:308.11px;font-size:10.5px;line-height:10.5px;color:#1a1a1a;font-weight:normal;">12:30pm</div>
<div class="b" style="left:317px;top:372px;width:66px;height:31px;background:#c0e4f8"></div>
<div class="b" style="left:317px;top:372px;width:7px;height:31px;background:#92bde6"></div>
<div class="t" style="left:327.5px;top:374.11px;font-size:10.5px;line-height:10.5px;color:#1a1a1a;font-weight:normal;">11:00am</div>
<div class="t" style="left:327.5px;top:386.91px;font-size:10.5px;line-height:10.5px;color:#1a1a1a;font-weight:normal;">CMIS 260</div>
<div class="b" style="left:317px;top:404px;width:66px;height:18px;background:#c0e4f8"></div>
<div class="b" style="left:317px;top:404px;width:7px;height:18px;background:#92bde6"></div>
<div class="t" style="left:327.5px;top:406.11px;font-size:10.5px;line-height:10.5px;color:#1a1a1a;font-weight:normal;">12:30pm</div>
<div class="b" style="left:393px;top:372px;width:66px;height:31px;background:#c0e4f8"></div>
<div class="b" style="left:393px;top:372px;width:7px;height:31px;background:#92bde6"></div>
<div class="t" style="left:403.5px;top:374.11px;font-size:10.5px;line-height:10.5px;color:#1a1a1a;font-weight:normal;">11:00am</div>
<div class="t" style="left:403.5px;top:386.91px;font-size:10.5px;line-height:10.5px;color:#1a1a1a;font-weight:normal;">CMIS 26...</div>
<div class="b" style="left:393px;top:404px;width:66px;height:18px;background:#c0e4f8"></div>
<div class="b" style="left:393px;top:404px;width:7px;height:18px;background:#92bde6"></div>
<div class="t" style="left:403.5px;top:406.11px;font-size:10.5px;line-height:10.5px;color:#1a1a1a;font-weight:normal;">12:30pm</div>
<div class="b" style="left:469px;top:372px;width:66px;height:31px;background:#c0e4f8"></div>
<div class="b" style="left:469px;top:372px;width:7px;height:31px;background:#92bde6"></div>
<div class="t" style="left:479.5px;top:374.11px;font-size:10.5px;line-height:10.5px;color:#1a1a1a;font-weight:normal;">11:00am</div>
<div class="t" style="left:479.5px;top:386.91px;font-size:10.5px;line-height:10.5px;color:#1a1a1a;font-weight:normal;">CMIS 260</div>
<div class="b" style="left:469px;top:404px;width:66px;height:18px;background:#c0e4f8"></div>
<div class="b" style="left:469px;top:404px;width:7px;height:18px;background:#92bde6"></div>
<div class="t" style="left:479.5px;top:406.11px;font-size:10.5px;line-height:10.5px;color:#1a1a1a;font-weight:normal;">12:30pm</div>
<div class="b" style="left:317px;top:470px;width:66px;height:18px;background:#c0e4f8"></div>
<div class="b" style="left:317px;top:470px;width:7px;height:18px;background:#92bde6"></div>
<div class="t" style="left:327.5px;top:472.11px;font-size:10.5px;line-height:10.5px;color:#1a1a1a;font-weight:normal;">7:30am ...</div>
<div class="b" style="left:317px;top:489px;width:66px;height:18px;background:#c0e4f8"></div>
<div class="b" style="left:317px;top:489px;width:7px;height:18px;background:#92bde6"></div>
<div class="t" style="left:327.5px;top:491.11px;font-size:10.5px;line-height:10.5px;color:#1a1a1a;font-weight:normal;">11:00am</div>
<div class="b" style="left:317px;top:508px;width:66px;height:18px;background:#c0e4f8"></div>
<div class="b" style="left:317px;top:508px;width:7px;height:18px;background:#92bde6"></div>
<div class="t" style="left:327.5px;top:510.11px;font-size:10.5px;line-height:10.5px;color:#1a1a1a;font-weight:normal;">12:30pm</div>
<div class="b" style="left:393px;top:470px;width:66px;height:18px;background:#c0e4f8"></div>
<div class="b" style="left:393px;top:470px;width:7px;height:18px;background:#92bde6"></div>
<div class="t" style="left:403.5px;top:472.11px;font-size:10.5px;line-height:10.5px;color:#1a1a1a;font-weight:normal;">7:30am ...</div>
<div class="b" style="left:393px;top:489px;width:66px;height:18px;background:#c0e4f8"></div>
<div class="b" style="left:393px;top:489px;width:7px;height:18px;background:#92bde6"></div>
<div class="t" style="left:403.5px;top:491.11px;font-size:10.5px;line-height:10.5px;color:#1a1a1a;font-weight:normal;">11:00am</div>
<div class="b" style="left:393px;top:508px;width:66px;height:18px;background:#c0e4f8"></div>
<div class="b" style="left:393px;top:508px;width:7px;height:18px;background:#92bde6"></div>
<div class="t" style="left:403.5px;top:510.11px;font-size:10.5px;line-height:10.5px;color:#1a1a1a;font-weight:normal;">12:30pm</div>
<div class="b" style="left:469px;top:470px;width:66px;height:18px;background:#c0e4f8"></div>
<div class="b" style="left:469px;top:470px;width:7px;height:18px;background:#92bde6"></div>
<div class="t" style="left:479.5px;top:472.11px;font-size:10.5px;line-height:10.5px;color:#1a1a1a;font-weight:normal;">7:30am ...</div>
<div class="b" style="left:469px;top:489px;width:66px;height:18px;background:#c0e4f8"></div>
<div class="b" style="left:469px;top:489px;width:7px;height:18px;background:#92bde6"></div>
<div class="t" style="left:479.5px;top:491.11px;font-size:10.5px;line-height:10.5px;color:#1a1a1a;font-weight:normal;">11:00am</div>
<div class="b" style="left:469px;top:508px;width:66px;height:18px;background:#c0e4f8"></div>
<div class="b" style="left:469px;top:508px;width:7px;height:18px;background:#92bde6"></div>
<div class="t" style="left:479.5px;top:510.11px;font-size:10.5px;line-height:10.5px;color:#1a1a1a;font-weight:normal;">12:30pm</div>
<div class="b" style="left:317px;top:568px;width:66px;height:31px;background:#c0e4f8"></div>
<div class="b" style="left:317px;top:568px;width:7px;height:31px;background:#92bde6"></div>
<div class="t" style="left:327.5px;top:570.11px;font-size:10.5px;line-height:10.5px;color:#1a1a1a;font-weight:normal;">11:00am</div>
<div class="t" style="left:327.5px;top:582.91px;font-size:10.5px;line-height:10.5px;color:#1a1a1a;font-weight:normal;">CMIS 260</div>
<div class="b" style="left:317px;top:600px;width:66px;height:18px;background:#c0e4f8"></div>
<div class="b" style="left:317px;top:600px;width:7px;height:18px;background:#92bde6"></div>
<div class="t" style="left:327.5px;top:602.11px;font-size:10.5px;line-height:10.5px;color:#1a1a1a;font-weight:normal;">12:30pm</div>
<div class="b" style="left:393px;top:568px;width:66px;height:31px;background:#c0e4f8"></div>
<div class="b" style="left:393px;top:568px;width:7px;height:31px;background:#92bde6"></div>
<div class="t" style="left:403.5px;top:570.11px;font-size:10.5px;line-height:10.5px;color:#1a1a1a;font-weight:normal;">11:00am</div>
<div class="t" style="left:403.5px;top:582.91px;font-size:10.5px;line-height:10.5px;color:#1a1a1a;font-weight:normal;">CMIS 260</div>
<div class="b" style="left:393px;top:600px;width:66px;height:18px;background:#c0e4f8"></div>
<div class="b" style="left:393px;top:600px;width:7px;height:18px;background:#92bde6"></div>
<div class="t" style="left:403.5px;top:602.11px;font-size:10.5px;line-height:10.5px;color:#1a1a1a;font-weight:normal;">12:30pm</div>
<div class="b" style="left:469px;top:568px;width:66px;height:31px;background:#c0e4f8"></div>
<div class="b" style="left:469px;top:568px;width:7px;height:31px;background:#92bde6"></div>
<div class="t" style="left:479.5px;top:570.11px;font-size:10.5px;line-height:10.5px;color:#1a1a1a;font-weight:normal;">11:00am</div>
<div class="t" style="left:479.5px;top:582.91px;font-size:10.5px;line-height:10.5px;color:#1a1a1a;font-weight:normal;">CMIS 260</div>
<div class="b" style="left:469px;top:600px;width:66px;height:18px;background:#c0e4f8"></div>
<div class="b" style="left:469px;top:600px;width:7px;height:18px;background:#92bde6"></div>
<div class="t" style="left:479.5px;top:602.11px;font-size:10.5px;line-height:10.5px;color:#1a1a1a;font-weight:normal;">12:30pm</div>
<div class="b" style="left:317px;top:666px;width:66px;height:31px;background:#c0e4f8"></div>
<div class="b" style="left:317px;top:666px;width:7px;height:31px;background:#92bde6"></div>
<div class="t" style="left:327.5px;top:668.11px;font-size:10.5px;line-height:10.5px;color:#1a1a1a;font-weight:normal;">7:30am</div>
<div class="t" style="left:327.5px;top:680.91px;font-size:10.5px;line-height:10.5px;color:#1a1a1a;font-weight:normal;">Niki Out...</div>
<div class="b" style="left:317px;top:698px;width:66px;height:18px;background:#c0e4f8"></div>
<div class="b" style="left:317px;top:698px;width:7px;height:18px;background:#92bde6"></div>
<div class="t" style="left:327.5px;top:700.11px;font-size:10.5px;line-height:10.5px;color:#1a1a1a;font-weight:normal;">12:30pm</div>
<div class="b" style="left:393px;top:666px;width:66px;height:31px;background:#c0e4f8"></div>
<div class="b" style="left:393px;top:666px;width:7px;height:31px;background:#92bde6"></div>
<div class="t" style="left:403.5px;top:668.11px;font-size:10.5px;line-height:10.5px;color:#1a1a1a;font-weight:normal;">11:00am</div>
<div class="t" style="left:403.5px;top:680.91px;font-size:10.5px;line-height:10.5px;color:#1a1a1a;font-weight:normal;">CMIS 260</div>
<div class="b" style="left:393px;top:698px;width:66px;height:18px;background:#c0e4f8"></div>
<div class="b" style="left:393px;top:698px;width:7px;height:18px;background:#92bde6"></div>
<div class="t" style="left:403.5px;top:700.11px;font-size:10.5px;line-height:10.5px;color:#1a1a1a;font-weight:normal;">12:30pm</div>
<div class="b" style="left:469px;top:666px;width:66px;height:18px;background:#c0e4f8"></div>
<div class="b" style="left:469px;top:666px;width:7px;height:18px;background:#92bde6"></div>
<div class="t" style="left:479.5px;top:668.11px;font-size:10.5px;line-height:10.5px;color:#1a1a1a;font-weight:normal;">9:30am ...</div>
<div class="b" style="left:469px;top:685px;width:66px;height:18px;background:#c0e4f8"></div>
<div class="b" style="left:469px;top:685px;width:7px;height:18px;background:#92bde6"></div>
<div class="t" style="left:479.5px;top:687.11px;font-size:10.5px;line-height:10.5px;color:#1a1a1a;font-weight:normal;">1:00pm .</div>
<div class="b" style="left:469px;top:704px;width:66px;height:18px;background:#c0e4f8"></div>
<div class="b" style="left:469px;top:704px;width:7px;height:18px;background:#92bde6"></div>
<div class="t" style="left:479.5px;top:706.11px;font-size:10.5px;line-height:10.5px;color:#1a1a1a;font-weight:normal;">1:00pm l...</div>
<div class="b" style="left:621px;top:666px;width:66px;height:31px;background:#c0e4f8"></div>
<div class="b" style="left:621px;top:666px;width:7px;height:31px;background:#92bde6"></div>
<div class="t" style="left:631.5px;top:668.11px;font-size:10.5px;line-height:10.5px;color:#1a1a1a;font-weight:normal;">10:00am</div>
<div class="t" style="left:631.5px;top:680.91px;font-size:10.5px;line-height:10.5px;color:#1a1a1a;font-weight:normal;">CMIS 260</div>
<div class="b" style="left:621px;top:698px;width:66px;height:18px;background:#c0e4f8"></div>
<div class="b" style="left:621px;top:698px;width:7px;height:18px;background:#92bde6"></div>
<div class="t" style="left:631.5px;top:700.11px;font-size:10.5px;line-height:10.5px;color:#1a1a1a;font-weight:normal;">1:00pm .</div>
<div class="b" style="left:1097px;top:567px;width:66px;height:44px;background:#b5e4b8"></div>
<div class="b" style="left:1097px;top:567px;width:7px;height:44px;background:#72c279"></div>
<div class="t" style="left:1107.5px;top:569.81px;font-size:10.5px;line-height:10.5px;color:#262626;font-weight:normal;">7:30am</div>
<div class="t" style="left:1107.5px;top:582.61px;font-size:10.5px;line-height:10.5px;color:#262626;font-weight:normal;">Can you</div>
<div class="t" style="left:1107.5px;top:595.41px;font-size:10.5px;line-height:10.5px;color:#262626;font-weight:normal;">edit me?</div>
<div class="b" style="left:476px;top:106px;width:390px;height:535px;background:#f0f0f0;border:1px solid #c0525a;box-shadow:0 0 14px 2px rgba(0,0,0,0.28)"></div>
<div class="b" style="left:477px;top:107px;width:388px;height:30px;background:#ffffff"></div>
<div class="t" style="left:485.7px;top:116.10px;font-size:11.7px;line-height:11.7px;color:#000;font-weight:normal;">Testing Properties</div>
<svg class="b" style="left:844px;top:116px;" width="12" height="11" viewBox="0 0 12 11"><path d="M0.5 0.5 L11 10.5 M11 0.5 L0.5 10.5" stroke="#111" stroke-width="1.1"/></svg>
<div class="b" style="left:483px;top:164px;width:374px;height:439px;background:#ffffff;border:1px solid #d9d9d9"></div>
<div class="b" style="left:485.7px;top:146px;width:52px;height:19px;background:#f0f0f0;border:1px solid #d9d9d9;border-bottom:none"></div>
<div class="t" style="left:490.5px;top:150.85px;font-size:11.4px;line-height:11.4px;color:#000;font-weight:normal;">General</div>
<div class="b" style="left:536.4px;top:146px;width:71px;height:19px;background:#f0f0f0;border:1px solid #d9d9d9;border-bottom:none"></div>
<div class="t" style="left:542px;top:150.85px;font-size:11.4px;line-height:11.4px;color:#000;font-weight:normal;">Home Page</div>
<div class="b" style="left:606px;top:146px;width:75px;height:19px;background:#f0f0f0;border:1px solid #d9d9d9;border-bottom:none"></div>
<div class="t" style="left:612.5px;top:150.85px;font-size:11.4px;line-height:11.4px;color:#000;font-weight:normal;">AutoArchive</div>
<div class="b" style="left:754.4px;top:146px;width:92px;height:19px;background:#f0f0f0;border:1px solid #d9d9d9;border-bottom:none"></div>
<div class="t" style="left:759.4px;top:150.85px;font-size:11.4px;line-height:11.4px;color:#000;font-weight:normal;">Synchronization</div>
<div class="b" style="left:679px;top:144px;width:76px;height:22px;background:#ffffff;border:1px solid #d9d9d9;border-bottom:none"></div>
<div class="t" style="left:687.4px;top:149.27px;font-size:10.9px;line-height:10.9px;color:#000;font-weight:normal;">Permissions</div>
<div class="b" style="left:493px;top:173px;width:304px;height:104px;background:#fff;border:1px solid #828790"></div>
<div class="b" style="left:699px;top:175px;width:1px;height:24px;background:#e5e5e5"></div>
<div class="t" style="left:501.6px;top:181.94px;font-size:10.7px;line-height:10.7px;color:#000;font-weight:normal;">Name</div>
<div class="t" style="left:706.5px;top:181.93px;font-size:11.3px;line-height:11.3px;color:#000;font-weight:normal;width:72px;overflow:hidden">Permission Lev</div>
<div class="b" style="left:499px;top:216px;width:279px;height:17px;background:#f0f0f0"></div>
<div class="b" style="left:494px;top:200px;width:285px;height:58px;overflow:hidden">
<div class="t" style="left:7.5px;top:2.23px;font-size:11.3px;line-height:11.3px;color:#000">Nelson, Wayne</div>
<div class="t" style="left:212.5px;top:2.23px;font-size:11.3px;line-height:11.3px;color:#000">Reviewer</div>
<div class="t" style="left:7.5px;top:19.33px;font-size:11.3px;line-height:11.3px;color:#000">Coons, Jonathan</div>
<div class="t" style="left:212.5px;top:19.33px;font-size:11.3px;line-height:11.3px;color:#000">Custom</div>
<div class="t" style="left:7.5px;top:36.33px;font-size:11.3px;line-height:11.3px;color:#000">Reany, Tori</div>
<div class="t" style="left:212.5px;top:36.33px;font-size:11.3px;line-height:11.3px;color:#000">Reviewer</div>
<div class="t" style="left:7.5px;top:53.33px;font-size:11.3px;line-height:11.3px;color:#000">Schmitz, Matthew</div>
<div class="t" style="left:212.5px;top:53.33px;font-size:11.3px;line-height:11.3px;color:#000">Reviewer</div>
</div>
<div class="b" style="left:779px;top:174px;width:17px;height:85px;background:#f0f0f0"></div>
<div class="b" style="left:780px;top:203px;width:15px;height:17px;background:#cdcdcd"></div>
<svg class="b" style="left:783px;top:181px;" width="9" height="6" viewBox="0 0 9 6"><path d="M0.5 5 L4.5 1 L8.5 5" fill="none" stroke="#606060" stroke-width="1.3"/></svg>
<svg class="b" style="left:783px;top:247px;" width="9" height="6" viewBox="0 0 9 6"><path d="M0.5 1 L4.5 5 L8.5 1" fill="none" stroke="#606060" stroke-width="1.3"/></svg>
<div class="b" style="left:494px;top:259px;width:302px;height:17px;background:#f0f0f0"></div>
<div class="b" style="left:512px;top:260px;width:220px;height:15px;background:#cdcdcd"></div>
<svg class="b" style="left:500px;top:263px;" width="6" height="9" viewBox="0 0 6 9"><path d="M5 0.5 L1 4.5 L5 8.5" fill="none" stroke="#606060" stroke-width="1.3"/></svg>
<svg class="b" style="left:767px;top:263px;" width="6" height="9" viewBox="0 0 6 9"><path d="M1 0.5 L5 4.5 L1 8.5" fill="none" stroke="#606060" stroke-width="1.3"/></svg>
<div class="b" style="left:543px;top:281px;width:77px;height:21px;background:#e1e1e1;border:1px solid #adadad"></div>
<div class="t" style="left:543.0px;width:77px;text-align:center;top:286.93px;font-size:11.3px;line-height:11.3px;color:#000;font-weight:normal;">Add...</div>
<div class="b" style="left:631px;top:281px;width:77px;height:21px;background:#e1e1e1;border:1px solid #adadad"></div>
<div class="t" style="left:631.0px;width:77px;text-align:center;top:286.93px;font-size:11.3px;line-height:11.3px;color:#000;font-weight:normal;">Remove</div>
<div class="b" style="left:719px;top:281px;width:77px;height:21px;background:#e1e1e1;border:1px solid #adadad"></div>
<div class="t" style="left:719.0px;width:77px;text-align:center;top:286.93px;font-size:11.3px;line-height:11.3px;color:#000;font-weight:normal;">Properties...</div>
<div class="b" style="left:493px;top:312px;width:304px;height:228px;border:1px solid #dcdcdc"></div>
<div class="b" style="left:500.4px;top:310px;width:66px;height:4px;background:#fff"></div>
<div class="t" style="left:502.4px;top:306.93px;font-size:11.3px;line-height:11.3px;color:#000;font-weight:normal;">Permissions</div>
<div class="t" style="left:502.4px;top:331.73px;font-size:10.95px;line-height:10.95px;color:#000;font-weight:normal;">Permission Level:</div>
<div class="b" style="left:597px;top:326px;width:191px;height:21px;background:#e5e5e5;border:1px solid #adadad"></div>
<div class="t" style="left:604.5px;top:331.43px;font-size:11.3px;line-height:11.3px;color:#000;font-weight:normal;">Custom</div>
<svg class="b" style="left:773px;top:333px;" width="11" height="7" viewBox="0 0 11 7"><path d="M0.5 0.5 L5.5 5.5 L10.5 0.5" fill="none" stroke="#333" stroke-width="1.1"/></svg>
<div class="b" style="left:502px;top:356px;width:139px;height:93px;border:1px solid #dcdcdc"></div>
<div class="b" style="left:509.2px;top:354px;width:32px;height:4px;background:#fff"></div>
<div class="t" style="left:511.2px;top:350.93px;font-size:11.3px;line-height:11.3px;color:#000;font-weight:normal;">Read</div>
<div class="b" style="left:650px;top:356px;width:138px;height:93px;border:1px solid #dcdcdc"></div>
<div class="b" style="left:657.2px;top:354px;width:36px;height:4px;background:#fff"></div>
<div class="t" style="left:659.2px;top:350.93px;font-size:11.3px;line-height:11.3px;color:#000;font-weight:normal;">Write</div>
<div class="b" style="left:502px;top:459px;width:139px;height:74px;border:1px solid #dcdcdc"></div>
<div class="b" style="left:509.2px;top:457px;width:70px;height:4px;background:#fff"></div>
<div class="t" style="left:511.2px;top:453.93px;font-size:11.3px;line-height:11.3px;color:#000;font-weight:normal;">Delete items</div>
<div class="b" style="left:650px;top:459px;width:138px;height:74px;border:1px solid #dcdcdc"></div>
<div class="b" style="left:657.2px;top:457px;width:37px;height:4px;background:#fff"></div>
<div class="t" style="left:659.2px;top:453.93px;font-size:11.3px;line-height:11.3px;color:#000;font-weight:normal;">Other</div>
<div class="b" style="left:511.0px;top:371.1px;width:13px;height:13px;border-radius:50%;border:1px solid #333;background:#fff"></div>
<div class="t" style="left:528.0px;top:373.03px;font-size:11.3px;line-height:11.3px;color:#000;font-weight:normal;">None</div>
<div class="b" style="left:511.0px;top:390.1px;width:13px;height:13px;border-radius:50%;border:1px solid #333;background:#fff"></div>
<div class="b" style="left:514.0px;top:393.1px;width:7px;height:7px;border-radius:50%;background:#222"></div>
<div class="t" style="left:528.0px;top:392.03px;font-size:11.3px;line-height:11.3px;color:#000;font-weight:normal;">Full Details</div>
<div class="b" style="left:659px;top:371.1px;width:13px;height:13px;border:1px solid #333;background:#fff"></div>
<svg class="b" style="left:660px;top:372.1px;" width="11" height="11" viewBox="0 0 11 11"><path d="M1.5 5.5 L4 8.5 L9.5 2" fill="none" stroke="#222" stroke-width="1.2"/></svg>
<div class="t" style="left:675.5px;top:373.03px;font-size:11.3px;line-height:11.3px;color:#000;font-weight:normal;">Create items</div>
<div class="b" style="left:659px;top:390.1px;width:13px;height:13px;border:1px solid #333;background:#fff"></div>
<div class="t" style="left:675.5px;top:392.03px;font-size:11.3px;line-height:11.3px;color:#000;font-weight:normal;">Create subfolders</div>
<div class="b" style="left:659px;top:409.2px;width:13px;height:13px;border:1px solid #333;background:#fff"></div>
<svg class="b" style="left:660px;top:410.2px;" width="11" height="11" viewBox="0 0 11 11"><path d="M1.5 5.5 L4 8.5 L9.5 2" fill="none" stroke="#222" stroke-width="1.2"/></svg>
<div class="t" style="left:675.5px;top:411.13px;font-size:11.3px;line-height:11.3px;color:#000;font-weight:normal;">Edit own</div>
<div class="b" style="left:659px;top:428.3px;width:13px;height:13px;border:1px solid #333;background:#fff"></div>
<div class="t" style="left:675.5px;top:430.23px;font-size:11.3px;line-height:11.3px;color:#000;font-weight:normal;">Edit all</div>
<div class="b" style="left:511.0px;top:474.3px;width:13px;height:13px;border-radius:50%;border:1px solid #333;background:#fff"></div>
<div class="t" style="left:528.0px;top:476.23px;font-size:11.3px;line-height:11.3px;color:#000;font-weight:normal;">None</div>
<div class="b" style="left:511.0px;top:493.2px;width:13px;height:13px;border-radius:50%;border:1px solid #2f8fd6;background:#fff"></div>
<div class="t" style="left:528.0px;top:495.13px;font-size:11.3px;line-height:11.3px;color:#000;font-weight:normal;">Own</div>
<div class="b" style="left:511.0px;top:512.1px;width:13px;height:13px;border-radius:50%;border:1px solid #333;background:#fff"></div>
<div class="b" style="left:514.0px;top:515.1px;width:7px;height:7px;border-radius:50%;background:#222"></div>
<div class="t" style="left:528.0px;top:514.03px;font-size:11.3px;line-height:11.3px;color:#000;font-weight:normal;">All</div>
<div class="b" style="left:659px;top:474.3px;width:13px;height:13px;border:1px solid #333;background:#fff"></div>
<div class="t" style="left:675.5px;top:476.23px;font-size:11.3px;line-height:11.3px;color:#000;font-weight:normal;">Folder owner</div>
<div class="b" style="left:659px;top:493.2px;width:13px;height:13px;border:1px solid #333;background:#fff"></div>
<div class="t" style="left:675.5px;top:495.13px;font-size:11.3px;line-height:11.3px;color:#000;font-weight:normal;">Folder contact</div>
<div class="b" style="left:659px;top:512.1px;width:13px;height:13px;border:1px solid #333;background:#fff"></div>
<svg class="b" style="left:660px;top:513.1px;" width="11" height="11" viewBox="0 0 11 11"><path d="M1.5 5.5 L4 8.5 L9.5 2" fill="none" stroke="#222" stroke-width="1.2"/></svg>
<div class="t" style="left:675.5px;top:514.03px;font-size:11.3px;line-height:11.3px;color:#000;font-weight:normal;">Folder visible</div>
<div class="b" style="left:623px;top:611px;width:73px;height:21px;background:#e1e1e1;border:2px solid #0078d7"></div>
<div class="t" style="left:623.0px;width:73px;text-align:center;top:616.93px;font-size:11.3px;line-height:11.3px;color:#000;font-weight:normal;">OK</div>
<div class="b" style="left:704px;top:611px;width:73px;height:21px;background:#e1e1e1;border:1px solid #adadad"></div>
<div class="t" style="left:704.0px;width:73px;text-align:center;top:616.93px;font-size:11.3px;line-height:11.3px;color:#000;font-weight:normal;">Cancel</div>
<div class="b" style="left:785px;top:611px;width:73px;height:21px;background:#e1e1e1;border:1px solid #adadad"></div>
<div class="t" style="left:785.0px;width:73px;text-align:center;top:616.93px;font-size:11.3px;line-height:11.3px;color:#000;font-weight:normal;">Apply</div>
</body></html>
